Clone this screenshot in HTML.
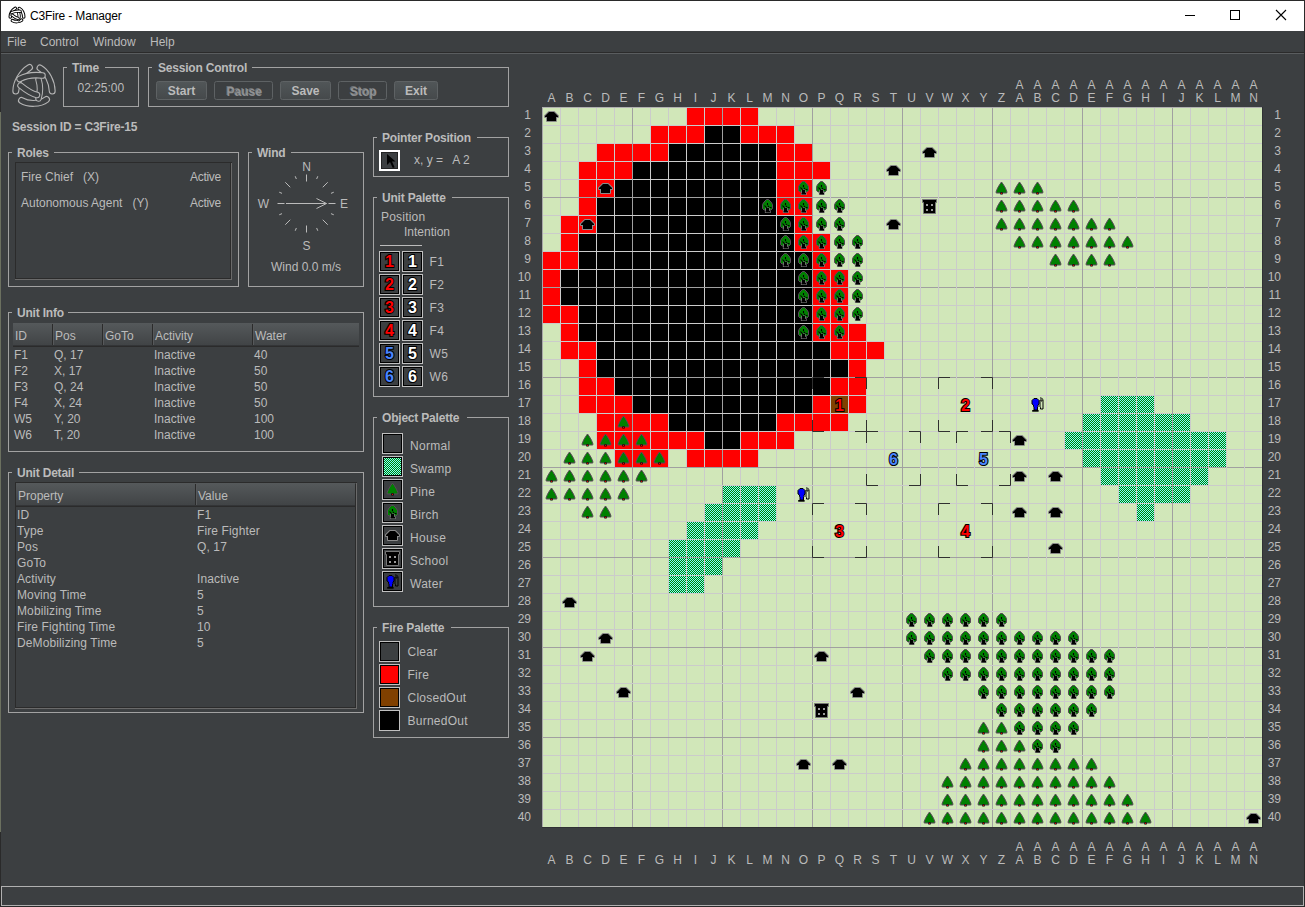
<!DOCTYPE html>
<html><head><meta charset="utf-8"><title>C3Fire - Manager</title>
<style>
html,body{margin:0;padding:0;background:#3c3f41;width:1305px;height:907px;overflow:hidden}
svg{display:block;font-family:"Liberation Sans", sans-serif}
</style></head><body>
<svg width="1305" height="907" viewBox="0 0 1305 907">
<defs>
<linearGradient id="btng" x1="0" y1="0" x2="0" y2="1"><stop offset="0" stop-color="#515658"/><stop offset="1" stop-color="#45494b"/></linearGradient>
<linearGradient id="hdrg" x1="0" y1="0" x2="0" y2="1"><stop offset="0" stop-color="#55595b"/><stop offset="1" stop-color="#3f4244"/></linearGradient>
<pattern id="swp" x="0" y="0" width="2" height="2" patternUnits="userSpaceOnUse"><rect width="2" height="2" fill="#008000"/><rect x="0" y="0" width="1" height="1" fill="#80ffff"/><rect x="1" y="1" width="1" height="1" fill="#80ffff"/></pattern>
<symbol id="house" overflow="visible"><path d="M6 4 L11 4 L15 8 L15 9 L13 9 L13 13 L4 13 L4 9 L2 9 L2 8 Z" fill="#000" stroke="#8a8a8a" stroke-width="2" paint-order="stroke" stroke-linejoin="round"/></symbol>
<symbol id="pine" overflow="visible"><path d="M8.5 2 L10.5 4.8 L12.5 8.3 L13.8 11.5 L13.8 13 L3.2 13 L3.2 11.5 L4.5 8.3 L6.5 4.8 Z" fill="#008000" stroke="#5a465a" stroke-width="1" stroke-linejoin="round"/><rect x="7.3" y="12.3" width="2.4" height="2.2" fill="#000"/><rect x="8" y="12.8" width="1" height="1.2" fill="#e00000"/></symbol>
<symbol id="birch" overflow="visible"><path d="M7.5 1.5 H9.5 L12 4 L13.5 6.5 V10.5 L12 12 H10 L9.5 11 H7.5 L7 12 H5 L3.5 10.5 V6.5 L5 4 Z" fill="#008000" stroke="#5a465a" stroke-width="1" stroke-linejoin="miter"/><path d="M7 10 H10 V12.5 L11 13 V14.5 H6.5 V13 L7 12.5 Z" fill="#000" stroke="#8a8a8a" stroke-width="1.2" paint-order="stroke"/><path d="M5.5 7.5 L8 10.3 M8.5 5 L8.5 7.2 M9 9 L10 8 M10.5 9.5 L12.5 9.5" stroke="#000" stroke-width="1.1" fill="none"/></symbol>
<symbol id="school" overflow="visible"><path d="M1.5 1.5 L15.5 1.5 L15.5 4.5 L14.5 4.5 L14.5 15.5 L2.5 15.5 L2.5 4.5 L1.5 4.5 Z" fill="#000" stroke="#777" stroke-width="1"/><rect x="5" y="6" width="2" height="2" fill="#9a9a9a"/><rect x="10" y="6" width="2" height="2" fill="#9a9a9a"/><rect x="5" y="11" width="2" height="2" fill="#9a9a9a"/><rect x="10" y="11" width="2" height="2" fill="#9a9a9a"/></symbol>
<symbol id="water" overflow="visible"><path d="M11 4 H14 V13 H11.5 V11.5 L11 11 Z" fill="none" stroke="#000" stroke-width="1"/><path d="M11 2 H12.5 L14 3.5" fill="none" stroke="#000" stroke-width="1"/><rect x="12" y="4.5" width="1" height="1" fill="#000"/><path d="M5 2.5 H8 L10 4.5 V8 L9 9 V10.5 L8.5 11 V14 H5 V11 L4.5 10.5 V9 L3 8 V4.5 Z" fill="#0000ff" stroke="#000" stroke-width="1"/><rect x="3.2" y="14" width="6.4" height="1.7" fill="#000"/></symbol>
</defs>
<rect x="0" y="0" width="1305" height="907" fill="#3c3f41"/><rect x="0" y="0" width="1305" height="1" fill="#2a2a2a"/><rect x="1" y="1" width="1303" height="30" fill="#ffffff"/><text x="30" y="20" font-size="12" font-weight="normal" fill="#000000" text-anchor="start" letter-spacing="-0.15">C3Fire - Manager</text><rect x="1185" y="15" width="10" height="1" fill="#000"/><rect x="1230.5" y="10.5" width="9" height="9" fill="none" stroke="#000" stroke-width="1"/><path d="M1276 10 L1286 20 M1286 10 L1276 20" stroke="#000" stroke-width="1.1" fill="none"/><text x="7" y="46" font-size="12" font-weight="normal" fill="#bbbbbb" text-anchor="start" >File</text><text x="40" y="46" font-size="12" font-weight="normal" fill="#bbbbbb" text-anchor="start" >Control</text><text x="93" y="46" font-size="12" font-weight="normal" fill="#bbbbbb" text-anchor="start" >Window</text><text x="150" y="46" font-size="12" font-weight="normal" fill="#bbbbbb" text-anchor="start" >Help</text><rect x="1" y="52" width="1303" height="1" fill="#2b2b2b"/><rect x="1" y="53" width="1303" height="1" fill="#5a5d5f"/><rect x="0" y="0" width="1" height="907" fill="#2a2a2a"/><rect x="0" y="112" width="1" height="720" fill="#6b705f"/><rect x="1304" y="0" width="1" height="907" fill="#2a2a2a"/><rect x="0" y="906" width="1305" height="1" fill="#2a2a2a"/><path d="M29.5 67.5 C 22 72 16 82 15.8 91" stroke="#b4b4b4" stroke-width="7" fill="none" stroke-linecap="round"/><path d="M29.5 67.5 C 22 72 16 82 15.8 91" stroke="#3c3f41" stroke-width="4.8" fill="none" stroke-linecap="round"/><path d="M40 68 C 47 72 52 82 52.2 91" stroke="#b4b4b4" stroke-width="7" fill="none" stroke-linecap="round"/><path d="M40 68 C 47 72 52 82 52.2 91" stroke="#3c3f41" stroke-width="4.8" fill="none" stroke-linecap="round"/><path d="M21.5 100.5 C 28 104.5 40 104.5 46.5 99.5" stroke="#b4b4b4" stroke-width="7" fill="none" stroke-linecap="round"/><path d="M21.5 100.5 C 28 104.5 40 104.5 46.5 99.5" stroke="#3c3f41" stroke-width="4.8" fill="none" stroke-linecap="round"/><path d="M38.5 79.5 C 40.5 86 40.5 92 38.5 98.5" stroke="#b4b4b4" stroke-width="6.510000000000001" fill="none" stroke-linecap="round"/><path d="M38.5 79.5 C 40.5 86 40.5 92 38.5 98.5" stroke="#3c3f41" stroke-width="4.464" fill="none" stroke-linecap="round"/><path d="M20.5 85.5 C 26 90 31 93.5 37 95" stroke="#b4b4b4" stroke-width="6.510000000000001" fill="none" stroke-linecap="round"/><path d="M20.5 85.5 C 26 90 31 93.5 37 95" stroke="#3c3f41" stroke-width="4.464" fill="none" stroke-linecap="round"/><path d="M19.5 79 C 26 75.5 34 74.5 42.5 75.5" stroke="#b4b4b4" stroke-width="6.510000000000001" fill="none" stroke-linecap="round"/><path d="M19.5 79 C 26 75.5 34 74.5 42.5 75.5" stroke="#3c3f41" stroke-width="4.464" fill="none" stroke-linecap="round"/><g transform="translate(17,15) scale(0.37) translate(-34,-85.5)"><path d="M29.5 67.5 C 22 72 16 82 15.8 91" stroke="#000000" stroke-width="9.5" fill="none" stroke-linecap="round"/><path d="M29.5 67.5 C 22 72 16 82 15.8 91" stroke="#ffffff" stroke-width="4.2" fill="none" stroke-linecap="round"/><path d="M40 68 C 47 72 52 82 52.2 91" stroke="#000000" stroke-width="9.5" fill="none" stroke-linecap="round"/><path d="M40 68 C 47 72 52 82 52.2 91" stroke="#ffffff" stroke-width="4.2" fill="none" stroke-linecap="round"/><path d="M21.5 100.5 C 28 104.5 40 104.5 46.5 99.5" stroke="#000000" stroke-width="9.5" fill="none" stroke-linecap="round"/><path d="M21.5 100.5 C 28 104.5 40 104.5 46.5 99.5" stroke="#ffffff" stroke-width="4.2" fill="none" stroke-linecap="round"/><path d="M38.5 79.5 C 40.5 86 40.5 92 38.5 98.5" stroke="#000000" stroke-width="8.835" fill="none" stroke-linecap="round"/><path d="M38.5 79.5 C 40.5 86 40.5 92 38.5 98.5" stroke="#ffffff" stroke-width="3.9060000000000006" fill="none" stroke-linecap="round"/><path d="M20.5 85.5 C 26 90 31 93.5 37 95" stroke="#000000" stroke-width="8.835" fill="none" stroke-linecap="round"/><path d="M20.5 85.5 C 26 90 31 93.5 37 95" stroke="#ffffff" stroke-width="3.9060000000000006" fill="none" stroke-linecap="round"/><path d="M19.5 79 C 26 75.5 34 74.5 42.5 75.5" stroke="#000000" stroke-width="8.835" fill="none" stroke-linecap="round"/><path d="M19.5 79 C 26 75.5 34 74.5 42.5 75.5" stroke="#ffffff" stroke-width="3.9060000000000006" fill="none" stroke-linecap="round"/></g><rect x="63" y="67" width="4" height="1" fill="#a2a2a2"/><rect x="105" y="67" width="34" height="1" fill="#a2a2a2"/><rect x="63" y="106" width="76" height="1" fill="#a2a2a2"/><rect x="63" y="67" width="1" height="40" fill="#a2a2a2"/><rect x="138" y="67" width="1" height="40" fill="#a2a2a2"/><text x="72" y="72" font-size="12" font-weight="bold" fill="#bbbbbb" text-anchor="start" letter-spacing="-0.2">Time</text><text x="77.5" y="92" font-size="12" font-weight="normal" fill="#bbbbbb" text-anchor="start" >02:25:00</text><rect x="148" y="67" width="4" height="1" fill="#a2a2a2"/><rect x="252" y="67" width="257" height="1" fill="#a2a2a2"/><rect x="148" y="106" width="361" height="1" fill="#a2a2a2"/><rect x="148" y="67" width="1" height="40" fill="#a2a2a2"/><rect x="508" y="67" width="1" height="40" fill="#a2a2a2"/><text x="158" y="72" font-size="12" font-weight="bold" fill="#bbbbbb" text-anchor="start" letter-spacing="-0.2">Session Control</text><rect x="156.5" y="81.5" width="50" height="18" rx="2" fill="url(#btng)" stroke="#5e6264"/><text x="181.5" y="95" font-size="12" font-weight="bold" fill="#bbbbbb" text-anchor="middle" >Start</text><rect x="214.5" y="81.5" width="58" height="18" rx="2" fill="#3c3f41" stroke="#5e6264"/><text x="244.5" y="96" font-size="12" font-weight="bold" fill="#8a8c8e" text-anchor="middle" >Pause</text><text x="243.5" y="95" font-size="12" font-weight="bold" fill="#9c9ea0" text-anchor="middle" opacity="0.55">Pause</text><rect x="280.5" y="81.5" width="50" height="18" rx="2" fill="url(#btng)" stroke="#5e6264"/><text x="305.5" y="95" font-size="12" font-weight="bold" fill="#bbbbbb" text-anchor="middle" >Save</text><rect x="338.5" y="81.5" width="48" height="18" rx="2" fill="#3c3f41" stroke="#5e6264"/><text x="363.5" y="96" font-size="12" font-weight="bold" fill="#8a8c8e" text-anchor="middle" >Stop</text><text x="362.5" y="95" font-size="12" font-weight="bold" fill="#9c9ea0" text-anchor="middle" opacity="0.55">Stop</text><rect x="394.5" y="81.5" width="43" height="18" rx="2" fill="url(#btng)" stroke="#5e6264"/><text x="416.0" y="95" font-size="12" font-weight="bold" fill="#bbbbbb" text-anchor="middle" >Exit</text><text x="12" y="131" font-size="12" font-weight="bold" fill="#bbbbbb" text-anchor="start" letter-spacing="-0.2">Session ID = C3Fire-15</text><rect x="8" y="152" width="4" height="1" fill="#a2a2a2"/><rect x="54" y="152" width="185" height="1" fill="#a2a2a2"/><rect x="8" y="286" width="231" height="1" fill="#a2a2a2"/><rect x="8" y="152" width="1" height="135" fill="#a2a2a2"/><rect x="238" y="152" width="1" height="135" fill="#a2a2a2"/><text x="17" y="157" font-size="12" font-weight="bold" fill="#bbbbbb" text-anchor="start" letter-spacing="-0.2">Roles</text><rect x="15" y="162" width="217" height="1" fill="#2b2b2b"/><rect x="15" y="162" width="1" height="118" fill="#2b2b2b"/><rect x="16" y="278" width="215" height="1" fill="#2b2b2b"/><rect x="230" y="163" width="1" height="116" fill="#2b2b2b"/><rect x="15" y="279" width="217" height="1" fill="#6a6a6a"/><rect x="231" y="163" width="1" height="117" fill="#6a6a6a"/><text x="21" y="181" font-size="12" font-weight="normal" fill="#bbbbbb" text-anchor="start" xml:space="preserve">Fire Chief   (X)</text><text x="190" y="181" font-size="12" font-weight="normal" fill="#bbbbbb" text-anchor="start" letter-spacing="-0.3">Active</text><text x="21" y="207" font-size="12" font-weight="normal" fill="#bbbbbb" text-anchor="start" xml:space="preserve">Autonomous Agent   (Y)</text><text x="190" y="207" font-size="12" font-weight="normal" fill="#bbbbbb" text-anchor="start" letter-spacing="-0.3">Active</text><rect x="248" y="152" width="4" height="1" fill="#a2a2a2"/><rect x="291" y="152" width="73" height="1" fill="#a2a2a2"/><rect x="248" y="286" width="116" height="1" fill="#a2a2a2"/><rect x="248" y="152" width="1" height="135" fill="#a2a2a2"/><rect x="363" y="152" width="1" height="135" fill="#a2a2a2"/><text x="257" y="157" font-size="12" font-weight="bold" fill="#bbbbbb" text-anchor="start" letter-spacing="-0.2">Wind</text><path d="M306.50 181.50 L306.50 174.50 M316.64 179.02 L317.79 176.25 M322.76 187.24 L327.71 182.29 M330.98 193.36 L333.75 192.21 M328.50 203.50 L335.50 203.50 M330.98 213.64 L333.75 214.79 M322.76 219.76 L327.71 224.71 M316.64 227.98 L317.79 230.75 M306.50 225.50 L306.50 232.50 M296.36 227.98 L295.21 230.75 M290.24 219.76 L285.29 224.71 M282.02 213.64 L279.25 214.79 M284.50 203.50 L277.50 203.50 M282.02 193.36 L279.25 192.21 M290.24 187.24 L285.29 182.29 M296.36 179.02 L295.21 176.25" stroke="#bbbbbb" stroke-width="1" fill="none"/><path d="M286 203.5 L326.5 203.5 M316.5 198.5 L326.5 203.5 L316.5 208.5" stroke="#bbbbbb" stroke-width="1" fill="none"/><text x="306.5" y="171" font-size="12" font-weight="normal" fill="#bbbbbb" text-anchor="middle" >N</text><text x="306.5" y="250" font-size="12" font-weight="normal" fill="#bbbbbb" text-anchor="middle" >S</text><text x="263.5" y="208" font-size="12" font-weight="normal" fill="#bbbbbb" text-anchor="middle" >W</text><text x="344" y="208" font-size="12" font-weight="normal" fill="#bbbbbb" text-anchor="middle" >E</text><text x="306" y="271" font-size="12" font-weight="normal" fill="#bbbbbb" text-anchor="middle" >Wind 0.0 m/s</text><rect x="8" y="312" width="4" height="1" fill="#a2a2a2"/><rect x="68" y="312" width="296" height="1" fill="#a2a2a2"/><rect x="8" y="451" width="356" height="1" fill="#a2a2a2"/><rect x="8" y="312" width="1" height="140" fill="#a2a2a2"/><rect x="363" y="312" width="1" height="140" fill="#a2a2a2"/><text x="17" y="317" font-size="12" font-weight="bold" fill="#bbbbbb" text-anchor="start" letter-spacing="-0.2">Unit Info</text><rect x="13" y="323" width="346" height="24" fill="url(#hdrg)"/><rect x="13" y="346" width="346" height="1" fill="#2b2b2b"/><rect x="13" y="345" width="346" height="1" fill="#333537"/><rect x="52" y="324" width="1" height="21" fill="#2b2b2b"/><rect x="53" y="324" width="1" height="21" fill="#57595b"/><rect x="102" y="324" width="1" height="21" fill="#2b2b2b"/><rect x="103" y="324" width="1" height="21" fill="#57595b"/><rect x="152" y="324" width="1" height="21" fill="#2b2b2b"/><rect x="153" y="324" width="1" height="21" fill="#57595b"/><rect x="252" y="324" width="1" height="21" fill="#2b2b2b"/><rect x="253" y="324" width="1" height="21" fill="#57595b"/><text x="15" y="340" font-size="12" font-weight="normal" fill="#bbbbbb" text-anchor="start" >ID</text><text x="55" y="340" font-size="12" font-weight="normal" fill="#bbbbbb" text-anchor="start" >Pos</text><text x="105" y="340" font-size="12" font-weight="normal" fill="#bbbbbb" text-anchor="start" >GoTo</text><text x="155" y="340" font-size="12" font-weight="normal" fill="#bbbbbb" text-anchor="start" >Activity</text><text x="255" y="340" font-size="12" font-weight="normal" fill="#bbbbbb" text-anchor="start" >Water</text><text x="14" y="359" font-size="12" font-weight="normal" fill="#bbbbbb" text-anchor="start" >F1</text><text x="54" y="359" font-size="12" font-weight="normal" fill="#bbbbbb" text-anchor="start" >Q, 17</text><text x="154" y="359" font-size="12" font-weight="normal" fill="#bbbbbb" text-anchor="start" >Inactive</text><text x="254" y="359" font-size="12" font-weight="normal" fill="#bbbbbb" text-anchor="start" >40</text><text x="14" y="375" font-size="12" font-weight="normal" fill="#bbbbbb" text-anchor="start" >F2</text><text x="54" y="375" font-size="12" font-weight="normal" fill="#bbbbbb" text-anchor="start" >X, 17</text><text x="154" y="375" font-size="12" font-weight="normal" fill="#bbbbbb" text-anchor="start" >Inactive</text><text x="254" y="375" font-size="12" font-weight="normal" fill="#bbbbbb" text-anchor="start" >50</text><text x="14" y="391" font-size="12" font-weight="normal" fill="#bbbbbb" text-anchor="start" >F3</text><text x="54" y="391" font-size="12" font-weight="normal" fill="#bbbbbb" text-anchor="start" >Q, 24</text><text x="154" y="391" font-size="12" font-weight="normal" fill="#bbbbbb" text-anchor="start" >Inactive</text><text x="254" y="391" font-size="12" font-weight="normal" fill="#bbbbbb" text-anchor="start" >50</text><text x="14" y="407" font-size="12" font-weight="normal" fill="#bbbbbb" text-anchor="start" >F4</text><text x="54" y="407" font-size="12" font-weight="normal" fill="#bbbbbb" text-anchor="start" >X, 24</text><text x="154" y="407" font-size="12" font-weight="normal" fill="#bbbbbb" text-anchor="start" >Inactive</text><text x="254" y="407" font-size="12" font-weight="normal" fill="#bbbbbb" text-anchor="start" >50</text><text x="14" y="423" font-size="12" font-weight="normal" fill="#bbbbbb" text-anchor="start" >W5</text><text x="54" y="423" font-size="12" font-weight="normal" fill="#bbbbbb" text-anchor="start" >Y, 20</text><text x="154" y="423" font-size="12" font-weight="normal" fill="#bbbbbb" text-anchor="start" >Inactive</text><text x="254" y="423" font-size="12" font-weight="normal" fill="#bbbbbb" text-anchor="start" >100</text><text x="14" y="439" font-size="12" font-weight="normal" fill="#bbbbbb" text-anchor="start" >W6</text><text x="54" y="439" font-size="12" font-weight="normal" fill="#bbbbbb" text-anchor="start" >T, 20</text><text x="154" y="439" font-size="12" font-weight="normal" fill="#bbbbbb" text-anchor="start" >Inactive</text><text x="254" y="439" font-size="12" font-weight="normal" fill="#bbbbbb" text-anchor="start" >100</text><rect x="8" y="472" width="4" height="1" fill="#a2a2a2"/><rect x="79" y="472" width="285" height="1" fill="#a2a2a2"/><rect x="8" y="712" width="356" height="1" fill="#a2a2a2"/><rect x="8" y="472" width="1" height="241" fill="#a2a2a2"/><rect x="363" y="472" width="1" height="241" fill="#a2a2a2"/><text x="17" y="477" font-size="12" font-weight="bold" fill="#bbbbbb" text-anchor="start" letter-spacing="-0.2">Unit Detail</text><rect x="15" y="482" width="342" height="1" fill="#2b2b2b"/><rect x="15" y="482" width="1" height="227" fill="#2b2b2b"/><rect x="15" y="708" width="342" height="1" fill="#6a6a6a"/><rect x="356" y="483" width="1" height="226" fill="#6a6a6a"/><rect x="16" y="707" width="340" height="1" fill="#2b2b2b"/><rect x="355" y="484" width="1" height="224" fill="#2b2b2b"/><rect x="16" y="483" width="339" height="24" fill="url(#hdrg)"/><rect x="16" y="506" width="339" height="1" fill="#2b2b2b"/><rect x="16" y="505" width="339" height="1" fill="#333537"/><rect x="195" y="484" width="1" height="21" fill="#2b2b2b"/><rect x="196" y="484" width="1" height="21" fill="#57595b"/><text x="18" y="500" font-size="12" font-weight="normal" fill="#bbbbbb" text-anchor="start" >Property</text><text x="198" y="500" font-size="12" font-weight="normal" fill="#bbbbbb" text-anchor="start" >Value</text><text x="17" y="519" font-size="12" font-weight="normal" fill="#bbbbbb" text-anchor="start" letter-spacing="0.12">ID</text><text x="197" y="519" font-size="12" font-weight="normal" fill="#bbbbbb" text-anchor="start" letter-spacing="0.12">F1</text><text x="17" y="535" font-size="12" font-weight="normal" fill="#bbbbbb" text-anchor="start" letter-spacing="0.12">Type</text><text x="197" y="535" font-size="12" font-weight="normal" fill="#bbbbbb" text-anchor="start" letter-spacing="0.12">Fire Fighter</text><text x="17" y="551" font-size="12" font-weight="normal" fill="#bbbbbb" text-anchor="start" letter-spacing="0.12">Pos</text><text x="197" y="551" font-size="12" font-weight="normal" fill="#bbbbbb" text-anchor="start" letter-spacing="0.12">Q, 17</text><text x="17" y="567" font-size="12" font-weight="normal" fill="#bbbbbb" text-anchor="start" letter-spacing="0.12">GoTo</text><text x="17" y="583" font-size="12" font-weight="normal" fill="#bbbbbb" text-anchor="start" letter-spacing="0.12">Activity</text><text x="197" y="583" font-size="12" font-weight="normal" fill="#bbbbbb" text-anchor="start" letter-spacing="0.12">Inactive</text><text x="17" y="599" font-size="12" font-weight="normal" fill="#bbbbbb" text-anchor="start" letter-spacing="0.12">Moving Time</text><text x="197" y="599" font-size="12" font-weight="normal" fill="#bbbbbb" text-anchor="start" letter-spacing="0.12">5</text><text x="17" y="615" font-size="12" font-weight="normal" fill="#bbbbbb" text-anchor="start" letter-spacing="0.12">Mobilizing Time</text><text x="197" y="615" font-size="12" font-weight="normal" fill="#bbbbbb" text-anchor="start" letter-spacing="0.12">5</text><text x="17" y="631" font-size="12" font-weight="normal" fill="#bbbbbb" text-anchor="start" letter-spacing="0.12">Fire Fighting Time</text><text x="197" y="631" font-size="12" font-weight="normal" fill="#bbbbbb" text-anchor="start" letter-spacing="0.12">10</text><text x="17" y="647" font-size="12" font-weight="normal" fill="#bbbbbb" text-anchor="start" letter-spacing="0.12">DeMobilizing Time</text><text x="197" y="647" font-size="12" font-weight="normal" fill="#bbbbbb" text-anchor="start" letter-spacing="0.12">5</text><rect x="373" y="137" width="4" height="1" fill="#a2a2a2"/><rect x="477" y="137" width="32" height="1" fill="#a2a2a2"/><rect x="373" y="176" width="136" height="1" fill="#a2a2a2"/><rect x="373" y="137" width="1" height="40" fill="#a2a2a2"/><rect x="508" y="137" width="1" height="40" fill="#a2a2a2"/><text x="382" y="142" font-size="12" font-weight="bold" fill="#bbbbbb" text-anchor="start" letter-spacing="-0.2">Pointer Position</text><rect x="380" y="151" width="19" height="19" fill="none" stroke="#ffffff" stroke-width="2"/><rect x="381.5" y="152.5" width="16" height="16" fill="#3c3f41" stroke="#232323" stroke-width="1"/><path d="M387 154 L387 165 L390 162 L392.8 168 L394.6 167.2 L392 161.6 L395.5 161.6 Z" fill="#000"/><text x="414" y="164" font-size="12" font-weight="normal" fill="#bbbbbb" text-anchor="start" xml:space="preserve">x, y =   A 2</text><rect x="373" y="197" width="4" height="1" fill="#a2a2a2"/><rect x="452" y="197" width="57" height="1" fill="#a2a2a2"/><rect x="373" y="396" width="136" height="1" fill="#a2a2a2"/><rect x="373" y="197" width="1" height="200" fill="#a2a2a2"/><rect x="508" y="197" width="1" height="200" fill="#a2a2a2"/><text x="382" y="202" font-size="12" font-weight="bold" fill="#bbbbbb" text-anchor="start" letter-spacing="-0.2">Unit Palette</text><text x="381" y="221" font-size="12" font-weight="normal" fill="#bbbbbb" text-anchor="start" letter-spacing="0.2">Position</text><text x="404" y="236" font-size="12" font-weight="normal" fill="#bbbbbb" text-anchor="start" >Intention</text><rect x="380" y="245" width="42" height="1" fill="#bbbbbb"/><rect x="379.5" y="251.5" width="20" height="20" fill="none" stroke="#c0c0c0"/><rect x="380.5" y="252.5" width="18" height="18" fill="#3c3f41" stroke="#000"/><rect x="402.5" y="251.5" width="20" height="20" fill="none" stroke="#c0c0c0"/><rect x="403.5" y="252.5" width="18" height="18" fill="#3c3f41" stroke="#000"/><text x="389.5" y="266.6" font-size="16" font-weight="bold" fill="#ff0000" stroke="#000" stroke-width="2" paint-order="stroke" text-anchor="middle" stroke-linejoin="miter">1</text><text x="412.5" y="266.6" font-size="16" font-weight="bold" fill="#ffffff" stroke="#000" stroke-width="2" paint-order="stroke" text-anchor="middle" stroke-linejoin="miter">1</text><text x="429.5" y="266" font-size="12" font-weight="normal" fill="#bbbbbb" text-anchor="start" letter-spacing="0.3">F1</text><rect x="379.5" y="274.5" width="20" height="20" fill="none" stroke="#c0c0c0"/><rect x="380.5" y="275.5" width="18" height="18" fill="#3c3f41" stroke="#000"/><rect x="402.5" y="274.5" width="20" height="20" fill="none" stroke="#c0c0c0"/><rect x="403.5" y="275.5" width="18" height="18" fill="#3c3f41" stroke="#000"/><text x="389.5" y="289.6" font-size="16" font-weight="bold" fill="#ff0000" stroke="#000" stroke-width="2" paint-order="stroke" text-anchor="middle" stroke-linejoin="miter">2</text><text x="412.5" y="289.6" font-size="16" font-weight="bold" fill="#ffffff" stroke="#000" stroke-width="2" paint-order="stroke" text-anchor="middle" stroke-linejoin="miter">2</text><text x="429.5" y="289" font-size="12" font-weight="normal" fill="#bbbbbb" text-anchor="start" letter-spacing="0.3">F2</text><rect x="379.5" y="297.5" width="20" height="20" fill="none" stroke="#c0c0c0"/><rect x="380.5" y="298.5" width="18" height="18" fill="#3c3f41" stroke="#000"/><rect x="402.5" y="297.5" width="20" height="20" fill="none" stroke="#c0c0c0"/><rect x="403.5" y="298.5" width="18" height="18" fill="#3c3f41" stroke="#000"/><text x="389.5" y="312.6" font-size="16" font-weight="bold" fill="#ff0000" stroke="#000" stroke-width="2" paint-order="stroke" text-anchor="middle" stroke-linejoin="miter">3</text><text x="412.5" y="312.6" font-size="16" font-weight="bold" fill="#ffffff" stroke="#000" stroke-width="2" paint-order="stroke" text-anchor="middle" stroke-linejoin="miter">3</text><text x="429.5" y="312" font-size="12" font-weight="normal" fill="#bbbbbb" text-anchor="start" letter-spacing="0.3">F3</text><rect x="379.5" y="320.5" width="20" height="20" fill="none" stroke="#c0c0c0"/><rect x="380.5" y="321.5" width="18" height="18" fill="#3c3f41" stroke="#000"/><rect x="402.5" y="320.5" width="20" height="20" fill="none" stroke="#c0c0c0"/><rect x="403.5" y="321.5" width="18" height="18" fill="#3c3f41" stroke="#000"/><text x="389.5" y="335.6" font-size="16" font-weight="bold" fill="#ff0000" stroke="#000" stroke-width="2" paint-order="stroke" text-anchor="middle" stroke-linejoin="miter">4</text><text x="412.5" y="335.6" font-size="16" font-weight="bold" fill="#ffffff" stroke="#000" stroke-width="2" paint-order="stroke" text-anchor="middle" stroke-linejoin="miter">4</text><text x="429.5" y="335" font-size="12" font-weight="normal" fill="#bbbbbb" text-anchor="start" letter-spacing="0.3">F4</text><rect x="379.5" y="343.5" width="20" height="20" fill="none" stroke="#c0c0c0"/><rect x="380.5" y="344.5" width="18" height="18" fill="#3c3f41" stroke="#000"/><rect x="402.5" y="343.5" width="20" height="20" fill="none" stroke="#c0c0c0"/><rect x="403.5" y="344.5" width="18" height="18" fill="#3c3f41" stroke="#000"/><text x="389.5" y="358.6" font-size="16" font-weight="bold" fill="#4a86ff" stroke="#000" stroke-width="2" paint-order="stroke" text-anchor="middle" stroke-linejoin="miter">5</text><text x="412.5" y="358.6" font-size="16" font-weight="bold" fill="#ffffff" stroke="#000" stroke-width="2" paint-order="stroke" text-anchor="middle" stroke-linejoin="miter">5</text><text x="429.5" y="358" font-size="12" font-weight="normal" fill="#bbbbbb" text-anchor="start" letter-spacing="0.3">W5</text><rect x="379.5" y="366.5" width="20" height="20" fill="none" stroke="#c0c0c0"/><rect x="380.5" y="367.5" width="18" height="18" fill="#3c3f41" stroke="#000"/><rect x="402.5" y="366.5" width="20" height="20" fill="none" stroke="#c0c0c0"/><rect x="403.5" y="367.5" width="18" height="18" fill="#3c3f41" stroke="#000"/><text x="389.5" y="381.6" font-size="16" font-weight="bold" fill="#4a86ff" stroke="#000" stroke-width="2" paint-order="stroke" text-anchor="middle" stroke-linejoin="miter">6</text><text x="412.5" y="381.6" font-size="16" font-weight="bold" fill="#ffffff" stroke="#000" stroke-width="2" paint-order="stroke" text-anchor="middle" stroke-linejoin="miter">6</text><text x="429.5" y="381" font-size="12" font-weight="normal" fill="#bbbbbb" text-anchor="start" letter-spacing="0.3">W6</text><rect x="373" y="417" width="4" height="1" fill="#a2a2a2"/><rect x="467" y="417" width="42" height="1" fill="#a2a2a2"/><rect x="373" y="606" width="136" height="1" fill="#a2a2a2"/><rect x="373" y="417" width="1" height="190" fill="#a2a2a2"/><rect x="508" y="417" width="1" height="190" fill="#a2a2a2"/><text x="382" y="422" font-size="12" font-weight="bold" fill="#bbbbbb" text-anchor="start" letter-spacing="-0.2">Object Palette</text><rect x="382.5" y="433.5" width="20" height="20" fill="none" stroke="#c0c0c0"/><rect x="383.5" y="434.5" width="18" height="18" fill="#3c3f41" stroke="#000"/><text x="410" y="450" font-size="12" font-weight="normal" fill="#bbbbbb" text-anchor="start" letter-spacing="0.28">Normal</text><rect x="382.5" y="456.5" width="20" height="20" fill="none" stroke="#c0c0c0"/><rect x="383.5" y="457.5" width="18" height="18" fill="#3c3f41" stroke="#000"/><rect x="384" y="458" width="17" height="17" fill="url(#swp)"/><text x="410" y="473" font-size="12" font-weight="normal" fill="#bbbbbb" text-anchor="start" letter-spacing="0.28">Swamp</text><rect x="382.5" y="479.5" width="20" height="20" fill="none" stroke="#c0c0c0"/><rect x="383.5" y="480.5" width="18" height="18" fill="#3c3f41" stroke="#000"/><use href="#pine" x="384" y="481"/><text x="410" y="496" font-size="12" font-weight="normal" fill="#bbbbbb" text-anchor="start" letter-spacing="0.28">Pine</text><rect x="382.5" y="502.5" width="20" height="20" fill="none" stroke="#c0c0c0"/><rect x="383.5" y="503.5" width="18" height="18" fill="#3c3f41" stroke="#000"/><use href="#birch" x="384" y="504"/><text x="410" y="519" font-size="12" font-weight="normal" fill="#bbbbbb" text-anchor="start" letter-spacing="0.28">Birch</text><rect x="382.5" y="525.5" width="20" height="20" fill="none" stroke="#c0c0c0"/><rect x="383.5" y="526.5" width="18" height="18" fill="#3c3f41" stroke="#000"/><use href="#house" x="384" y="527"/><text x="410" y="542" font-size="12" font-weight="normal" fill="#bbbbbb" text-anchor="start" letter-spacing="0.28">House</text><rect x="382.5" y="548.5" width="20" height="20" fill="none" stroke="#c0c0c0"/><rect x="383.5" y="549.5" width="18" height="18" fill="#3c3f41" stroke="#000"/><use href="#school" x="384" y="550"/><text x="410" y="565" font-size="12" font-weight="normal" fill="#bbbbbb" text-anchor="start" letter-spacing="0.28">School</text><rect x="382.5" y="571.5" width="20" height="20" fill="none" stroke="#c0c0c0"/><rect x="383.5" y="572.5" width="18" height="18" fill="#3c3f41" stroke="#000"/><use href="#water" x="384" y="573"/><text x="410" y="588" font-size="12" font-weight="normal" fill="#bbbbbb" text-anchor="start" letter-spacing="0.28">Water</text><rect x="373" y="627" width="4" height="1" fill="#a2a2a2"/><rect x="451" y="627" width="58" height="1" fill="#a2a2a2"/><rect x="373" y="737" width="136" height="1" fill="#a2a2a2"/><rect x="373" y="627" width="1" height="111" fill="#a2a2a2"/><rect x="508" y="627" width="1" height="111" fill="#a2a2a2"/><text x="382" y="632" font-size="12" font-weight="bold" fill="#bbbbbb" text-anchor="start" letter-spacing="-0.2">Fire Palette</text><rect x="379.5" y="641.5" width="20" height="20" fill="none" stroke="#c0c0c0"/><rect x="380.5" y="642.5" width="18" height="18" fill="#3c3f41" stroke="#000"/><text x="407.5" y="656" font-size="12" font-weight="normal" fill="#bbbbbb" text-anchor="start" letter-spacing="0.25">Clear</text><rect x="379.5" y="664.5" width="20" height="20" fill="none" stroke="#c0c0c0"/><rect x="380.5" y="665.5" width="18" height="18" fill="#ff0000" stroke="#000"/><text x="407.5" y="679" font-size="12" font-weight="normal" fill="#bbbbbb" text-anchor="start" letter-spacing="0.25">Fire</text><rect x="379.5" y="687.5" width="20" height="20" fill="none" stroke="#c0c0c0"/><rect x="380.5" y="688.5" width="18" height="18" fill="#804000" stroke="#000"/><text x="407.5" y="702" font-size="12" font-weight="normal" fill="#bbbbbb" text-anchor="start" letter-spacing="0.25">ClosedOut</text><rect x="379.5" y="710.5" width="20" height="20" fill="none" stroke="#c0c0c0"/><rect x="380.5" y="711.5" width="18" height="18" fill="#000000" stroke="#000"/><text x="407.5" y="725" font-size="12" font-weight="normal" fill="#bbbbbb" text-anchor="start" letter-spacing="0.25">BurnedOut</text><rect x="1.5" y="886.5" width="1302" height="19" fill="none" stroke="#b0b0b0"/><rect x="542" y="107" width="721" height="721" fill="#d1e7b9"/><rect x="687" y="108" width="17" height="17" fill="#ff0000"/><rect x="705" y="108" width="17" height="17" fill="#ff0000"/><rect x="723" y="108" width="17" height="17" fill="#ff0000"/><rect x="741" y="108" width="17" height="17" fill="#ff0000"/><rect x="651" y="126" width="17" height="17" fill="#ff0000"/><rect x="669" y="126" width="17" height="17" fill="#ff0000"/><rect x="687" y="126" width="17" height="17" fill="#ff0000"/><rect x="705" y="126" width="17" height="17" fill="#000000"/><rect x="723" y="126" width="17" height="17" fill="#000000"/><rect x="741" y="126" width="17" height="17" fill="#ff0000"/><rect x="759" y="126" width="17" height="17" fill="#ff0000"/><rect x="777" y="126" width="17" height="17" fill="#ff0000"/><rect x="597" y="144" width="17" height="17" fill="#ff0000"/><rect x="615" y="144" width="17" height="17" fill="#ff0000"/><rect x="633" y="144" width="17" height="17" fill="#ff0000"/><rect x="651" y="144" width="17" height="17" fill="#ff0000"/><rect x="669" y="144" width="17" height="17" fill="#000000"/><rect x="687" y="144" width="17" height="17" fill="#000000"/><rect x="705" y="144" width="17" height="17" fill="#000000"/><rect x="723" y="144" width="17" height="17" fill="#000000"/><rect x="741" y="144" width="17" height="17" fill="#000000"/><rect x="759" y="144" width="17" height="17" fill="#000000"/><rect x="777" y="144" width="17" height="17" fill="#ff0000"/><rect x="795" y="144" width="17" height="17" fill="#ff0000"/><rect x="579" y="162" width="17" height="17" fill="#ff0000"/><rect x="597" y="162" width="17" height="17" fill="#ff0000"/><rect x="615" y="162" width="17" height="17" fill="#ff0000"/><rect x="633" y="162" width="17" height="17" fill="#000000"/><rect x="651" y="162" width="17" height="17" fill="#000000"/><rect x="669" y="162" width="17" height="17" fill="#000000"/><rect x="687" y="162" width="17" height="17" fill="#000000"/><rect x="705" y="162" width="17" height="17" fill="#000000"/><rect x="723" y="162" width="17" height="17" fill="#000000"/><rect x="741" y="162" width="17" height="17" fill="#000000"/><rect x="759" y="162" width="17" height="17" fill="#000000"/><rect x="777" y="162" width="17" height="17" fill="#ff0000"/><rect x="795" y="162" width="17" height="17" fill="#ff0000"/><rect x="813" y="162" width="17" height="17" fill="#ff0000"/><rect x="579" y="180" width="17" height="17" fill="#ff0000"/><rect x="597" y="180" width="17" height="17" fill="#ff0000"/><rect x="615" y="180" width="17" height="17" fill="#000000"/><rect x="633" y="180" width="17" height="17" fill="#000000"/><rect x="651" y="180" width="17" height="17" fill="#000000"/><rect x="669" y="180" width="17" height="17" fill="#000000"/><rect x="687" y="180" width="17" height="17" fill="#000000"/><rect x="705" y="180" width="17" height="17" fill="#000000"/><rect x="723" y="180" width="17" height="17" fill="#000000"/><rect x="741" y="180" width="17" height="17" fill="#000000"/><rect x="759" y="180" width="17" height="17" fill="#000000"/><rect x="777" y="180" width="17" height="17" fill="#ff0000"/><rect x="795" y="180" width="17" height="17" fill="#ff0000"/><rect x="579" y="198" width="17" height="17" fill="#ff0000"/><rect x="597" y="198" width="17" height="17" fill="#000000"/><rect x="615" y="198" width="17" height="17" fill="#000000"/><rect x="633" y="198" width="17" height="17" fill="#000000"/><rect x="651" y="198" width="17" height="17" fill="#000000"/><rect x="669" y="198" width="17" height="17" fill="#000000"/><rect x="687" y="198" width="17" height="17" fill="#000000"/><rect x="705" y="198" width="17" height="17" fill="#000000"/><rect x="723" y="198" width="17" height="17" fill="#000000"/><rect x="741" y="198" width="17" height="17" fill="#000000"/><rect x="759" y="198" width="17" height="17" fill="#000000"/><rect x="777" y="198" width="17" height="17" fill="#ff0000"/><rect x="795" y="198" width="17" height="17" fill="#ff0000"/><rect x="561" y="216" width="17" height="17" fill="#ff0000"/><rect x="579" y="216" width="17" height="17" fill="#ff0000"/><rect x="597" y="216" width="17" height="17" fill="#000000"/><rect x="615" y="216" width="17" height="17" fill="#000000"/><rect x="633" y="216" width="17" height="17" fill="#000000"/><rect x="651" y="216" width="17" height="17" fill="#000000"/><rect x="669" y="216" width="17" height="17" fill="#000000"/><rect x="687" y="216" width="17" height="17" fill="#000000"/><rect x="705" y="216" width="17" height="17" fill="#000000"/><rect x="723" y="216" width="17" height="17" fill="#000000"/><rect x="741" y="216" width="17" height="17" fill="#000000"/><rect x="759" y="216" width="17" height="17" fill="#000000"/><rect x="777" y="216" width="17" height="17" fill="#000000"/><rect x="795" y="216" width="17" height="17" fill="#ff0000"/><rect x="561" y="234" width="17" height="17" fill="#ff0000"/><rect x="579" y="234" width="17" height="17" fill="#000000"/><rect x="597" y="234" width="17" height="17" fill="#000000"/><rect x="615" y="234" width="17" height="17" fill="#000000"/><rect x="633" y="234" width="17" height="17" fill="#000000"/><rect x="651" y="234" width="17" height="17" fill="#000000"/><rect x="669" y="234" width="17" height="17" fill="#000000"/><rect x="687" y="234" width="17" height="17" fill="#000000"/><rect x="705" y="234" width="17" height="17" fill="#000000"/><rect x="723" y="234" width="17" height="17" fill="#000000"/><rect x="741" y="234" width="17" height="17" fill="#000000"/><rect x="759" y="234" width="17" height="17" fill="#000000"/><rect x="777" y="234" width="17" height="17" fill="#000000"/><rect x="795" y="234" width="17" height="17" fill="#ff0000"/><rect x="813" y="234" width="17" height="17" fill="#ff0000"/><rect x="543" y="252" width="17" height="17" fill="#ff0000"/><rect x="561" y="252" width="17" height="17" fill="#ff0000"/><rect x="579" y="252" width="17" height="17" fill="#000000"/><rect x="597" y="252" width="17" height="17" fill="#000000"/><rect x="615" y="252" width="17" height="17" fill="#000000"/><rect x="633" y="252" width="17" height="17" fill="#000000"/><rect x="651" y="252" width="17" height="17" fill="#000000"/><rect x="669" y="252" width="17" height="17" fill="#000000"/><rect x="687" y="252" width="17" height="17" fill="#000000"/><rect x="705" y="252" width="17" height="17" fill="#000000"/><rect x="723" y="252" width="17" height="17" fill="#000000"/><rect x="741" y="252" width="17" height="17" fill="#000000"/><rect x="759" y="252" width="17" height="17" fill="#000000"/><rect x="777" y="252" width="17" height="17" fill="#000000"/><rect x="795" y="252" width="17" height="17" fill="#000000"/><rect x="813" y="252" width="17" height="17" fill="#ff0000"/><rect x="543" y="270" width="17" height="17" fill="#ff0000"/><rect x="561" y="270" width="17" height="17" fill="#000000"/><rect x="579" y="270" width="17" height="17" fill="#000000"/><rect x="597" y="270" width="17" height="17" fill="#000000"/><rect x="615" y="270" width="17" height="17" fill="#000000"/><rect x="633" y="270" width="17" height="17" fill="#000000"/><rect x="651" y="270" width="17" height="17" fill="#000000"/><rect x="669" y="270" width="17" height="17" fill="#000000"/><rect x="687" y="270" width="17" height="17" fill="#000000"/><rect x="705" y="270" width="17" height="17" fill="#000000"/><rect x="723" y="270" width="17" height="17" fill="#000000"/><rect x="741" y="270" width="17" height="17" fill="#000000"/><rect x="759" y="270" width="17" height="17" fill="#000000"/><rect x="777" y="270" width="17" height="17" fill="#000000"/><rect x="795" y="270" width="17" height="17" fill="#000000"/><rect x="813" y="270" width="17" height="17" fill="#ff0000"/><rect x="831" y="270" width="17" height="17" fill="#ff0000"/><rect x="543" y="288" width="17" height="17" fill="#ff0000"/><rect x="561" y="288" width="17" height="17" fill="#000000"/><rect x="579" y="288" width="17" height="17" fill="#000000"/><rect x="597" y="288" width="17" height="17" fill="#000000"/><rect x="615" y="288" width="17" height="17" fill="#000000"/><rect x="633" y="288" width="17" height="17" fill="#000000"/><rect x="651" y="288" width="17" height="17" fill="#000000"/><rect x="669" y="288" width="17" height="17" fill="#000000"/><rect x="687" y="288" width="17" height="17" fill="#000000"/><rect x="705" y="288" width="17" height="17" fill="#000000"/><rect x="723" y="288" width="17" height="17" fill="#000000"/><rect x="741" y="288" width="17" height="17" fill="#000000"/><rect x="759" y="288" width="17" height="17" fill="#000000"/><rect x="777" y="288" width="17" height="17" fill="#000000"/><rect x="795" y="288" width="17" height="17" fill="#000000"/><rect x="813" y="288" width="17" height="17" fill="#ff0000"/><rect x="831" y="288" width="17" height="17" fill="#ff0000"/><rect x="543" y="306" width="17" height="17" fill="#ff0000"/><rect x="561" y="306" width="17" height="17" fill="#ff0000"/><rect x="579" y="306" width="17" height="17" fill="#000000"/><rect x="597" y="306" width="17" height="17" fill="#000000"/><rect x="615" y="306" width="17" height="17" fill="#000000"/><rect x="633" y="306" width="17" height="17" fill="#000000"/><rect x="651" y="306" width="17" height="17" fill="#000000"/><rect x="669" y="306" width="17" height="17" fill="#000000"/><rect x="687" y="306" width="17" height="17" fill="#000000"/><rect x="705" y="306" width="17" height="17" fill="#000000"/><rect x="723" y="306" width="17" height="17" fill="#000000"/><rect x="741" y="306" width="17" height="17" fill="#000000"/><rect x="759" y="306" width="17" height="17" fill="#000000"/><rect x="777" y="306" width="17" height="17" fill="#000000"/><rect x="795" y="306" width="17" height="17" fill="#000000"/><rect x="813" y="306" width="17" height="17" fill="#ff0000"/><rect x="831" y="306" width="17" height="17" fill="#ff0000"/><rect x="561" y="324" width="17" height="17" fill="#ff0000"/><rect x="579" y="324" width="17" height="17" fill="#000000"/><rect x="597" y="324" width="17" height="17" fill="#000000"/><rect x="615" y="324" width="17" height="17" fill="#000000"/><rect x="633" y="324" width="17" height="17" fill="#000000"/><rect x="651" y="324" width="17" height="17" fill="#000000"/><rect x="669" y="324" width="17" height="17" fill="#000000"/><rect x="687" y="324" width="17" height="17" fill="#000000"/><rect x="705" y="324" width="17" height="17" fill="#000000"/><rect x="723" y="324" width="17" height="17" fill="#000000"/><rect x="741" y="324" width="17" height="17" fill="#000000"/><rect x="759" y="324" width="17" height="17" fill="#000000"/><rect x="777" y="324" width="17" height="17" fill="#000000"/><rect x="795" y="324" width="17" height="17" fill="#000000"/><rect x="813" y="324" width="17" height="17" fill="#ff0000"/><rect x="831" y="324" width="17" height="17" fill="#ff0000"/><rect x="849" y="324" width="17" height="17" fill="#ff0000"/><rect x="561" y="342" width="17" height="17" fill="#ff0000"/><rect x="579" y="342" width="17" height="17" fill="#ff0000"/><rect x="597" y="342" width="17" height="17" fill="#000000"/><rect x="615" y="342" width="17" height="17" fill="#000000"/><rect x="633" y="342" width="17" height="17" fill="#000000"/><rect x="651" y="342" width="17" height="17" fill="#000000"/><rect x="669" y="342" width="17" height="17" fill="#000000"/><rect x="687" y="342" width="17" height="17" fill="#000000"/><rect x="705" y="342" width="17" height="17" fill="#000000"/><rect x="723" y="342" width="17" height="17" fill="#000000"/><rect x="741" y="342" width="17" height="17" fill="#000000"/><rect x="759" y="342" width="17" height="17" fill="#000000"/><rect x="777" y="342" width="17" height="17" fill="#000000"/><rect x="795" y="342" width="17" height="17" fill="#000000"/><rect x="813" y="342" width="17" height="17" fill="#000000"/><rect x="831" y="342" width="17" height="17" fill="#ff0000"/><rect x="849" y="342" width="17" height="17" fill="#ff0000"/><rect x="867" y="342" width="17" height="17" fill="#ff0000"/><rect x="579" y="360" width="17" height="17" fill="#ff0000"/><rect x="597" y="360" width="17" height="17" fill="#000000"/><rect x="615" y="360" width="17" height="17" fill="#000000"/><rect x="633" y="360" width="17" height="17" fill="#000000"/><rect x="651" y="360" width="17" height="17" fill="#000000"/><rect x="669" y="360" width="17" height="17" fill="#000000"/><rect x="687" y="360" width="17" height="17" fill="#000000"/><rect x="705" y="360" width="17" height="17" fill="#000000"/><rect x="723" y="360" width="17" height="17" fill="#000000"/><rect x="741" y="360" width="17" height="17" fill="#000000"/><rect x="759" y="360" width="17" height="17" fill="#000000"/><rect x="777" y="360" width="17" height="17" fill="#000000"/><rect x="795" y="360" width="17" height="17" fill="#000000"/><rect x="813" y="360" width="17" height="17" fill="#000000"/><rect x="831" y="360" width="17" height="17" fill="#000000"/><rect x="849" y="360" width="17" height="17" fill="#ff0000"/><rect x="579" y="378" width="17" height="17" fill="#ff0000"/><rect x="597" y="378" width="17" height="17" fill="#ff0000"/><rect x="615" y="378" width="17" height="17" fill="#000000"/><rect x="633" y="378" width="17" height="17" fill="#000000"/><rect x="651" y="378" width="17" height="17" fill="#000000"/><rect x="669" y="378" width="17" height="17" fill="#000000"/><rect x="687" y="378" width="17" height="17" fill="#000000"/><rect x="705" y="378" width="17" height="17" fill="#000000"/><rect x="723" y="378" width="17" height="17" fill="#000000"/><rect x="741" y="378" width="17" height="17" fill="#000000"/><rect x="759" y="378" width="17" height="17" fill="#000000"/><rect x="777" y="378" width="17" height="17" fill="#000000"/><rect x="795" y="378" width="17" height="17" fill="#000000"/><rect x="813" y="378" width="17" height="17" fill="#000000"/><rect x="831" y="378" width="17" height="17" fill="#ff0000"/><rect x="849" y="378" width="17" height="17" fill="#ff0000"/><rect x="579" y="396" width="17" height="17" fill="#ff0000"/><rect x="597" y="396" width="17" height="17" fill="#ff0000"/><rect x="615" y="396" width="17" height="17" fill="#ff0000"/><rect x="633" y="396" width="17" height="17" fill="#000000"/><rect x="651" y="396" width="17" height="17" fill="#000000"/><rect x="669" y="396" width="17" height="17" fill="#000000"/><rect x="687" y="396" width="17" height="17" fill="#000000"/><rect x="705" y="396" width="17" height="17" fill="#000000"/><rect x="723" y="396" width="17" height="17" fill="#000000"/><rect x="741" y="396" width="17" height="17" fill="#000000"/><rect x="759" y="396" width="17" height="17" fill="#000000"/><rect x="777" y="396" width="17" height="17" fill="#000000"/><rect x="795" y="396" width="17" height="17" fill="#000000"/><rect x="813" y="396" width="17" height="17" fill="#ff0000"/><rect x="831" y="396" width="17" height="17" fill="#804000"/><rect x="849" y="396" width="17" height="17" fill="#ff0000"/><rect x="597" y="414" width="17" height="17" fill="#ff0000"/><rect x="615" y="414" width="17" height="17" fill="#ff0000"/><rect x="633" y="414" width="17" height="17" fill="#ff0000"/><rect x="651" y="414" width="17" height="17" fill="#ff0000"/><rect x="669" y="414" width="17" height="17" fill="#000000"/><rect x="687" y="414" width="17" height="17" fill="#000000"/><rect x="705" y="414" width="17" height="17" fill="#000000"/><rect x="723" y="414" width="17" height="17" fill="#000000"/><rect x="741" y="414" width="17" height="17" fill="#000000"/><rect x="759" y="414" width="17" height="17" fill="#000000"/><rect x="777" y="414" width="17" height="17" fill="#ff0000"/><rect x="795" y="414" width="17" height="17" fill="#ff0000"/><rect x="813" y="414" width="17" height="17" fill="#ff0000"/><rect x="831" y="414" width="17" height="17" fill="#ff0000"/><rect x="597" y="432" width="17" height="17" fill="#ff0000"/><rect x="615" y="432" width="17" height="17" fill="#ff0000"/><rect x="633" y="432" width="17" height="17" fill="#ff0000"/><rect x="651" y="432" width="17" height="17" fill="#ff0000"/><rect x="669" y="432" width="17" height="17" fill="#ff0000"/><rect x="687" y="432" width="17" height="17" fill="#ff0000"/><rect x="705" y="432" width="17" height="17" fill="#000000"/><rect x="723" y="432" width="17" height="17" fill="#000000"/><rect x="741" y="432" width="17" height="17" fill="#ff0000"/><rect x="759" y="432" width="17" height="17" fill="#ff0000"/><rect x="777" y="432" width="17" height="17" fill="#ff0000"/><rect x="615" y="450" width="17" height="17" fill="#ff0000"/><rect x="633" y="450" width="17" height="17" fill="#ff0000"/><rect x="651" y="450" width="17" height="17" fill="#ff0000"/><rect x="687" y="450" width="17" height="17" fill="#ff0000"/><rect x="705" y="450" width="17" height="17" fill="#ff0000"/><rect x="723" y="450" width="17" height="17" fill="#ff0000"/><rect x="741" y="450" width="17" height="17" fill="#ff0000"/><rect x="723" y="486" width="17" height="17" fill="url(#swp)"/><rect x="741" y="504" width="17" height="17" fill="url(#swp)"/><rect x="723" y="522" width="17" height="17" fill="url(#swp)"/><rect x="1119" y="396" width="17" height="17" fill="url(#swp)"/><rect x="1065" y="432" width="17" height="17" fill="url(#swp)"/><rect x="1173" y="432" width="17" height="17" fill="url(#swp)"/><rect x="1119" y="468" width="17" height="17" fill="url(#swp)"/><rect x="1119" y="432" width="17" height="17" fill="url(#swp)"/><rect x="1173" y="468" width="17" height="17" fill="url(#swp)"/><rect x="1155" y="486" width="17" height="17" fill="url(#swp)"/><rect x="669" y="558" width="17" height="17" fill="url(#swp)"/><rect x="1083" y="414" width="17" height="17" fill="url(#swp)"/><rect x="1137" y="414" width="17" height="17" fill="url(#swp)"/><rect x="1083" y="450" width="17" height="17" fill="url(#swp)"/><rect x="687" y="540" width="17" height="17" fill="url(#swp)"/><rect x="1137" y="450" width="17" height="17" fill="url(#swp)"/><rect x="687" y="576" width="17" height="17" fill="url(#swp)"/><rect x="1191" y="450" width="17" height="17" fill="url(#swp)"/><rect x="759" y="486" width="17" height="17" fill="url(#swp)"/><rect x="705" y="522" width="17" height="17" fill="url(#swp)"/><rect x="1101" y="396" width="17" height="17" fill="url(#swp)"/><rect x="723" y="504" width="17" height="17" fill="url(#swp)"/><rect x="1101" y="432" width="17" height="17" fill="url(#swp)"/><rect x="1209" y="432" width="17" height="17" fill="url(#swp)"/><rect x="1155" y="432" width="17" height="17" fill="url(#swp)"/><rect x="1137" y="486" width="17" height="17" fill="url(#swp)"/><rect x="1101" y="468" width="17" height="17" fill="url(#swp)"/><rect x="1155" y="468" width="17" height="17" fill="url(#swp)"/><rect x="705" y="558" width="17" height="17" fill="url(#swp)"/><rect x="669" y="540" width="17" height="17" fill="url(#swp)"/><rect x="1173" y="414" width="17" height="17" fill="url(#swp)"/><rect x="723" y="540" width="17" height="17" fill="url(#swp)"/><rect x="669" y="576" width="17" height="17" fill="url(#swp)"/><rect x="1119" y="414" width="17" height="17" fill="url(#swp)"/><rect x="1173" y="450" width="17" height="17" fill="url(#swp)"/><rect x="1119" y="450" width="17" height="17" fill="url(#swp)"/><rect x="741" y="522" width="17" height="17" fill="url(#swp)"/><rect x="705" y="504" width="17" height="17" fill="url(#swp)"/><rect x="741" y="486" width="17" height="17" fill="url(#swp)"/><rect x="1137" y="396" width="17" height="17" fill="url(#swp)"/><rect x="1083" y="432" width="17" height="17" fill="url(#swp)"/><rect x="759" y="504" width="17" height="17" fill="url(#swp)"/><rect x="687" y="522" width="17" height="17" fill="url(#swp)"/><rect x="1137" y="432" width="17" height="17" fill="url(#swp)"/><rect x="1191" y="432" width="17" height="17" fill="url(#swp)"/><rect x="1173" y="486" width="17" height="17" fill="url(#swp)"/><rect x="1137" y="468" width="17" height="17" fill="url(#swp)"/><rect x="1119" y="486" width="17" height="17" fill="url(#swp)"/><rect x="1191" y="468" width="17" height="17" fill="url(#swp)"/><rect x="1137" y="504" width="17" height="17" fill="url(#swp)"/><rect x="705" y="540" width="17" height="17" fill="url(#swp)"/><rect x="687" y="558" width="17" height="17" fill="url(#swp)"/><rect x="1101" y="414" width="17" height="17" fill="url(#swp)"/><rect x="1155" y="414" width="17" height="17" fill="url(#swp)"/><rect x="1101" y="450" width="17" height="17" fill="url(#swp)"/><rect x="1209" y="450" width="17" height="17" fill="url(#swp)"/><rect x="1155" y="450" width="17" height="17" fill="url(#swp)"/><rect x="560" y="107" width="1" height="720" fill="#cbcbcb"/><rect x="542" y="125" width="720" height="1" fill="#cbcbcb"/><rect x="578" y="107" width="1" height="720" fill="#cbcbcb"/><rect x="542" y="143" width="720" height="1" fill="#cbcbcb"/><rect x="596" y="107" width="1" height="720" fill="#cbcbcb"/><rect x="542" y="161" width="720" height="1" fill="#cbcbcb"/><rect x="614" y="107" width="1" height="720" fill="#cbcbcb"/><rect x="542" y="179" width="720" height="1" fill="#cbcbcb"/><rect x="632" y="107" width="1" height="720" fill="#a0a0a0"/><rect x="542" y="197" width="720" height="1" fill="#a0a0a0"/><rect x="650" y="107" width="1" height="720" fill="#cbcbcb"/><rect x="542" y="215" width="720" height="1" fill="#cbcbcb"/><rect x="668" y="107" width="1" height="720" fill="#cbcbcb"/><rect x="542" y="233" width="720" height="1" fill="#cbcbcb"/><rect x="686" y="107" width="1" height="720" fill="#cbcbcb"/><rect x="542" y="251" width="720" height="1" fill="#cbcbcb"/><rect x="704" y="107" width="1" height="720" fill="#cbcbcb"/><rect x="542" y="269" width="720" height="1" fill="#cbcbcb"/><rect x="722" y="107" width="1" height="720" fill="#a0a0a0"/><rect x="542" y="287" width="720" height="1" fill="#a0a0a0"/><rect x="740" y="107" width="1" height="720" fill="#cbcbcb"/><rect x="542" y="305" width="720" height="1" fill="#cbcbcb"/><rect x="758" y="107" width="1" height="720" fill="#cbcbcb"/><rect x="542" y="323" width="720" height="1" fill="#cbcbcb"/><rect x="776" y="107" width="1" height="720" fill="#cbcbcb"/><rect x="542" y="341" width="720" height="1" fill="#cbcbcb"/><rect x="794" y="107" width="1" height="720" fill="#cbcbcb"/><rect x="542" y="359" width="720" height="1" fill="#cbcbcb"/><rect x="812" y="107" width="1" height="720" fill="#a0a0a0"/><rect x="542" y="377" width="720" height="1" fill="#a0a0a0"/><rect x="830" y="107" width="1" height="720" fill="#cbcbcb"/><rect x="542" y="395" width="720" height="1" fill="#cbcbcb"/><rect x="848" y="107" width="1" height="720" fill="#cbcbcb"/><rect x="542" y="413" width="720" height="1" fill="#cbcbcb"/><rect x="866" y="107" width="1" height="720" fill="#cbcbcb"/><rect x="542" y="431" width="720" height="1" fill="#cbcbcb"/><rect x="884" y="107" width="1" height="720" fill="#cbcbcb"/><rect x="542" y="449" width="720" height="1" fill="#cbcbcb"/><rect x="902" y="107" width="1" height="720" fill="#a0a0a0"/><rect x="542" y="467" width="720" height="1" fill="#a0a0a0"/><rect x="920" y="107" width="1" height="720" fill="#cbcbcb"/><rect x="542" y="485" width="720" height="1" fill="#cbcbcb"/><rect x="938" y="107" width="1" height="720" fill="#cbcbcb"/><rect x="542" y="503" width="720" height="1" fill="#cbcbcb"/><rect x="956" y="107" width="1" height="720" fill="#cbcbcb"/><rect x="542" y="521" width="720" height="1" fill="#cbcbcb"/><rect x="974" y="107" width="1" height="720" fill="#cbcbcb"/><rect x="542" y="539" width="720" height="1" fill="#cbcbcb"/><rect x="992" y="107" width="1" height="720" fill="#a0a0a0"/><rect x="542" y="557" width="720" height="1" fill="#a0a0a0"/><rect x="1010" y="107" width="1" height="720" fill="#cbcbcb"/><rect x="542" y="575" width="720" height="1" fill="#cbcbcb"/><rect x="1028" y="107" width="1" height="720" fill="#cbcbcb"/><rect x="542" y="593" width="720" height="1" fill="#cbcbcb"/><rect x="1046" y="107" width="1" height="720" fill="#cbcbcb"/><rect x="542" y="611" width="720" height="1" fill="#cbcbcb"/><rect x="1064" y="107" width="1" height="720" fill="#cbcbcb"/><rect x="542" y="629" width="720" height="1" fill="#cbcbcb"/><rect x="1082" y="107" width="1" height="720" fill="#a0a0a0"/><rect x="542" y="647" width="720" height="1" fill="#a0a0a0"/><rect x="1100" y="107" width="1" height="720" fill="#cbcbcb"/><rect x="542" y="665" width="720" height="1" fill="#cbcbcb"/><rect x="1118" y="107" width="1" height="720" fill="#cbcbcb"/><rect x="542" y="683" width="720" height="1" fill="#cbcbcb"/><rect x="1136" y="107" width="1" height="720" fill="#cbcbcb"/><rect x="542" y="701" width="720" height="1" fill="#cbcbcb"/><rect x="1154" y="107" width="1" height="720" fill="#cbcbcb"/><rect x="542" y="719" width="720" height="1" fill="#cbcbcb"/><rect x="1172" y="107" width="1" height="720" fill="#a0a0a0"/><rect x="542" y="737" width="720" height="1" fill="#a0a0a0"/><rect x="1190" y="107" width="1" height="720" fill="#cbcbcb"/><rect x="542" y="755" width="720" height="1" fill="#cbcbcb"/><rect x="1208" y="107" width="1" height="720" fill="#cbcbcb"/><rect x="542" y="773" width="720" height="1" fill="#cbcbcb"/><rect x="1226" y="107" width="1" height="720" fill="#cbcbcb"/><rect x="542" y="791" width="720" height="1" fill="#cbcbcb"/><rect x="1244" y="107" width="1" height="720" fill="#cbcbcb"/><rect x="542" y="809" width="720" height="1" fill="#cbcbcb"/><rect x="542" y="107" width="1" height="720" fill="#a8a8a8"/><rect x="542" y="107" width="720" height="1" fill="#b0b0b0"/><rect x="1262" y="107" width="1" height="721" fill="#2f3133"/><rect x="542" y="827" width="721" height="1" fill="#2f3133"/><use href="#house" x="543" y="108"/><use href="#house" x="597" y="180"/><use href="#house" x="579" y="216"/><use href="#house" x="885" y="162"/><use href="#house" x="885" y="216"/><use href="#house" x="921" y="144"/><use href="#house" x="1011" y="432"/><use href="#house" x="1011" y="468"/><use href="#house" x="1047" y="468"/><use href="#house" x="1011" y="504"/><use href="#house" x="1047" y="504"/><use href="#house" x="1047" y="540"/><use href="#house" x="561" y="594"/><use href="#house" x="597" y="630"/><use href="#house" x="579" y="648"/><use href="#house" x="615" y="684"/><use href="#house" x="813" y="648"/><use href="#house" x="849" y="684"/><use href="#house" x="795" y="756"/><use href="#house" x="831" y="756"/><use href="#house" x="1245" y="810"/><use href="#school" x="921" y="198"/><use href="#school" x="813" y="702"/><use href="#water" x="1029" y="396"/><use href="#water" x="795" y="486"/><use href="#pine" x="615" y="414"/><use href="#pine" x="579" y="432"/><use href="#pine" x="597" y="432"/><use href="#pine" x="615" y="432"/><use href="#pine" x="633" y="432"/><use href="#pine" x="561" y="450"/><use href="#pine" x="579" y="450"/><use href="#pine" x="597" y="450"/><use href="#pine" x="615" y="450"/><use href="#pine" x="633" y="450"/><use href="#pine" x="651" y="450"/><use href="#pine" x="543" y="468"/><use href="#pine" x="561" y="468"/><use href="#pine" x="579" y="468"/><use href="#pine" x="597" y="468"/><use href="#pine" x="615" y="468"/><use href="#pine" x="633" y="468"/><use href="#pine" x="543" y="486"/><use href="#pine" x="561" y="486"/><use href="#pine" x="579" y="486"/><use href="#pine" x="597" y="486"/><use href="#pine" x="615" y="486"/><use href="#pine" x="579" y="504"/><use href="#pine" x="597" y="504"/><use href="#pine" x="993" y="180"/><use href="#pine" x="1011" y="180"/><use href="#pine" x="1029" y="180"/><use href="#pine" x="993" y="198"/><use href="#pine" x="1011" y="198"/><use href="#pine" x="1029" y="198"/><use href="#pine" x="1047" y="198"/><use href="#pine" x="1065" y="198"/><use href="#pine" x="993" y="216"/><use href="#pine" x="1011" y="216"/><use href="#pine" x="1029" y="216"/><use href="#pine" x="1047" y="216"/><use href="#pine" x="1065" y="216"/><use href="#pine" x="1083" y="216"/><use href="#pine" x="1101" y="216"/><use href="#pine" x="1011" y="234"/><use href="#pine" x="1029" y="234"/><use href="#pine" x="1047" y="234"/><use href="#pine" x="1065" y="234"/><use href="#pine" x="1083" y="234"/><use href="#pine" x="1101" y="234"/><use href="#pine" x="1119" y="234"/><use href="#pine" x="1047" y="252"/><use href="#pine" x="1065" y="252"/><use href="#pine" x="1083" y="252"/><use href="#pine" x="1101" y="252"/><use href="#pine" x="975" y="720"/><use href="#pine" x="993" y="720"/><use href="#pine" x="975" y="738"/><use href="#pine" x="993" y="738"/><use href="#pine" x="1011" y="738"/><use href="#pine" x="957" y="756"/><use href="#pine" x="975" y="756"/><use href="#pine" x="993" y="756"/><use href="#pine" x="1011" y="756"/><use href="#pine" x="1029" y="756"/><use href="#pine" x="1047" y="756"/><use href="#pine" x="1065" y="756"/><use href="#pine" x="1083" y="756"/><use href="#pine" x="939" y="774"/><use href="#pine" x="957" y="774"/><use href="#pine" x="975" y="774"/><use href="#pine" x="993" y="774"/><use href="#pine" x="1011" y="774"/><use href="#pine" x="1029" y="774"/><use href="#pine" x="1047" y="774"/><use href="#pine" x="1065" y="774"/><use href="#pine" x="1083" y="774"/><use href="#pine" x="1101" y="774"/><use href="#pine" x="939" y="792"/><use href="#pine" x="957" y="792"/><use href="#pine" x="975" y="792"/><use href="#pine" x="993" y="792"/><use href="#pine" x="1011" y="792"/><use href="#pine" x="1029" y="792"/><use href="#pine" x="1047" y="792"/><use href="#pine" x="1065" y="792"/><use href="#pine" x="1083" y="792"/><use href="#pine" x="1101" y="792"/><use href="#pine" x="1119" y="792"/><use href="#pine" x="921" y="810"/><use href="#pine" x="939" y="810"/><use href="#pine" x="957" y="810"/><use href="#pine" x="975" y="810"/><use href="#pine" x="993" y="810"/><use href="#pine" x="1011" y="810"/><use href="#pine" x="1029" y="810"/><use href="#pine" x="1047" y="810"/><use href="#pine" x="1065" y="810"/><use href="#pine" x="1083" y="810"/><use href="#pine" x="1101" y="810"/><use href="#pine" x="1119" y="810"/><use href="#pine" x="1137" y="810"/><use href="#birch" x="795" y="180"/><use href="#birch" x="813" y="180"/><use href="#birch" x="759" y="198"/><use href="#birch" x="777" y="198"/><use href="#birch" x="795" y="198"/><use href="#birch" x="813" y="198"/><use href="#birch" x="831" y="198"/><use href="#birch" x="777" y="216"/><use href="#birch" x="795" y="216"/><use href="#birch" x="813" y="216"/><use href="#birch" x="831" y="216"/><use href="#birch" x="777" y="234"/><use href="#birch" x="795" y="234"/><use href="#birch" x="813" y="234"/><use href="#birch" x="831" y="234"/><use href="#birch" x="849" y="234"/><use href="#birch" x="777" y="252"/><use href="#birch" x="795" y="252"/><use href="#birch" x="813" y="252"/><use href="#birch" x="831" y="252"/><use href="#birch" x="849" y="252"/><use href="#birch" x="795" y="270"/><use href="#birch" x="813" y="270"/><use href="#birch" x="831" y="270"/><use href="#birch" x="849" y="270"/><use href="#birch" x="795" y="288"/><use href="#birch" x="813" y="288"/><use href="#birch" x="831" y="288"/><use href="#birch" x="849" y="288"/><use href="#birch" x="795" y="306"/><use href="#birch" x="813" y="306"/><use href="#birch" x="831" y="306"/><use href="#birch" x="849" y="306"/><use href="#birch" x="795" y="324"/><use href="#birch" x="813" y="324"/><use href="#birch" x="831" y="324"/><use href="#birch" x="903" y="612"/><use href="#birch" x="921" y="612"/><use href="#birch" x="939" y="612"/><use href="#birch" x="957" y="612"/><use href="#birch" x="975" y="612"/><use href="#birch" x="993" y="612"/><use href="#birch" x="903" y="630"/><use href="#birch" x="921" y="630"/><use href="#birch" x="939" y="630"/><use href="#birch" x="957" y="630"/><use href="#birch" x="975" y="630"/><use href="#birch" x="993" y="630"/><use href="#birch" x="1011" y="630"/><use href="#birch" x="1029" y="630"/><use href="#birch" x="1047" y="630"/><use href="#birch" x="1065" y="630"/><use href="#birch" x="921" y="648"/><use href="#birch" x="939" y="648"/><use href="#birch" x="957" y="648"/><use href="#birch" x="975" y="648"/><use href="#birch" x="993" y="648"/><use href="#birch" x="1011" y="648"/><use href="#birch" x="1029" y="648"/><use href="#birch" x="1047" y="648"/><use href="#birch" x="1065" y="648"/><use href="#birch" x="1083" y="648"/><use href="#birch" x="1101" y="648"/><use href="#birch" x="939" y="666"/><use href="#birch" x="957" y="666"/><use href="#birch" x="975" y="666"/><use href="#birch" x="993" y="666"/><use href="#birch" x="1011" y="666"/><use href="#birch" x="1029" y="666"/><use href="#birch" x="1047" y="666"/><use href="#birch" x="1065" y="666"/><use href="#birch" x="1083" y="666"/><use href="#birch" x="1101" y="666"/><use href="#birch" x="975" y="684"/><use href="#birch" x="993" y="684"/><use href="#birch" x="1011" y="684"/><use href="#birch" x="1029" y="684"/><use href="#birch" x="1047" y="684"/><use href="#birch" x="1065" y="684"/><use href="#birch" x="1083" y="684"/><use href="#birch" x="1101" y="684"/><use href="#birch" x="993" y="702"/><use href="#birch" x="1011" y="702"/><use href="#birch" x="1029" y="702"/><use href="#birch" x="1047" y="702"/><use href="#birch" x="1065" y="702"/><use href="#birch" x="1083" y="702"/><use href="#birch" x="1011" y="720"/><use href="#birch" x="1029" y="720"/><use href="#birch" x="1047" y="720"/><use href="#birch" x="1065" y="720"/><use href="#birch" x="1029" y="738"/><use href="#birch" x="1047" y="738"/><text x="839.5" y="410.7" font-size="16" font-weight="bold" fill="#ff0000" stroke="#000" stroke-width="2" paint-order="stroke" text-anchor="middle" stroke-linejoin="miter">1</text><text x="965.5" y="410.7" font-size="16" font-weight="bold" fill="#ff0000" stroke="#000" stroke-width="2" paint-order="stroke" text-anchor="middle" stroke-linejoin="miter">2</text><text x="839.5" y="536.7" font-size="16" font-weight="bold" fill="#ff0000" stroke="#000" stroke-width="2" paint-order="stroke" text-anchor="middle" stroke-linejoin="miter">3</text><text x="965.5" y="536.7" font-size="16" font-weight="bold" fill="#ff0000" stroke="#000" stroke-width="2" paint-order="stroke" text-anchor="middle" stroke-linejoin="miter">4</text><text x="983.5" y="464.7" font-size="16" font-weight="bold" fill="#4a86ff" stroke="#000" stroke-width="2" paint-order="stroke" text-anchor="middle" stroke-linejoin="miter">5</text><text x="893.5" y="464.7" font-size="16" font-weight="bold" fill="#4a86ff" stroke="#000" stroke-width="2" paint-order="stroke" text-anchor="middle" stroke-linejoin="miter">6</text><path d="M823.5 377.5 L812.5 377.5 L812.5 388.5 M855.5 377.5 L866.5 377.5 L866.5 388.5 M823.5 431.5 L812.5 431.5 L812.5 420.5 M855.5 431.5 L866.5 431.5 L866.5 420.5 M949.5 377.5 L938.5 377.5 L938.5 388.5 M981.5 377.5 L992.5 377.5 L992.5 388.5 M949.5 431.5 L938.5 431.5 L938.5 420.5 M981.5 431.5 L992.5 431.5 L992.5 420.5 M823.5 503.5 L812.5 503.5 L812.5 514.5 M855.5 503.5 L866.5 503.5 L866.5 514.5 M823.5 557.5 L812.5 557.5 L812.5 546.5 M855.5 557.5 L866.5 557.5 L866.5 546.5 M949.5 503.5 L938.5 503.5 L938.5 514.5 M981.5 503.5 L992.5 503.5 L992.5 514.5 M949.5 557.5 L938.5 557.5 L938.5 546.5 M981.5 557.5 L992.5 557.5 L992.5 546.5 M967.5 431.5 L956.5 431.5 L956.5 442.5 M999.5 431.5 L1010.5 431.5 L1010.5 442.5 M967.5 485.5 L956.5 485.5 L956.5 474.5 M999.5 485.5 L1010.5 485.5 L1010.5 474.5 M877.5 431.5 L866.5 431.5 L866.5 442.5 M909.5 431.5 L920.5 431.5 L920.5 442.5 M877.5 485.5 L866.5 485.5 L866.5 474.5 M909.5 485.5 L920.5 485.5 L920.5 474.5" stroke="#303030" stroke-width="1" fill="none" stroke-linecap="square"/><text x="551.5" y="102" font-size="12" font-weight="normal" fill="#bbbbbb" text-anchor="middle" >A</text><text x="551.5" y="864" font-size="12" font-weight="normal" fill="#bbbbbb" text-anchor="middle" >A</text><text x="569.5" y="102" font-size="12" font-weight="normal" fill="#bbbbbb" text-anchor="middle" >B</text><text x="569.5" y="864" font-size="12" font-weight="normal" fill="#bbbbbb" text-anchor="middle" >B</text><text x="587.5" y="102" font-size="12" font-weight="normal" fill="#bbbbbb" text-anchor="middle" >C</text><text x="587.5" y="864" font-size="12" font-weight="normal" fill="#bbbbbb" text-anchor="middle" >C</text><text x="605.5" y="102" font-size="12" font-weight="normal" fill="#bbbbbb" text-anchor="middle" >D</text><text x="605.5" y="864" font-size="12" font-weight="normal" fill="#bbbbbb" text-anchor="middle" >D</text><text x="623.5" y="102" font-size="12" font-weight="normal" fill="#bbbbbb" text-anchor="middle" >E</text><text x="623.5" y="864" font-size="12" font-weight="normal" fill="#bbbbbb" text-anchor="middle" >E</text><text x="641.5" y="102" font-size="12" font-weight="normal" fill="#bbbbbb" text-anchor="middle" >F</text><text x="641.5" y="864" font-size="12" font-weight="normal" fill="#bbbbbb" text-anchor="middle" >F</text><text x="659.5" y="102" font-size="12" font-weight="normal" fill="#bbbbbb" text-anchor="middle" >G</text><text x="659.5" y="864" font-size="12" font-weight="normal" fill="#bbbbbb" text-anchor="middle" >G</text><text x="677.5" y="102" font-size="12" font-weight="normal" fill="#bbbbbb" text-anchor="middle" >H</text><text x="677.5" y="864" font-size="12" font-weight="normal" fill="#bbbbbb" text-anchor="middle" >H</text><text x="695.5" y="102" font-size="12" font-weight="normal" fill="#bbbbbb" text-anchor="middle" >I</text><text x="695.5" y="864" font-size="12" font-weight="normal" fill="#bbbbbb" text-anchor="middle" >I</text><text x="713.5" y="102" font-size="12" font-weight="normal" fill="#bbbbbb" text-anchor="middle" >J</text><text x="713.5" y="864" font-size="12" font-weight="normal" fill="#bbbbbb" text-anchor="middle" >J</text><text x="731.5" y="102" font-size="12" font-weight="normal" fill="#bbbbbb" text-anchor="middle" >K</text><text x="731.5" y="864" font-size="12" font-weight="normal" fill="#bbbbbb" text-anchor="middle" >K</text><text x="749.5" y="102" font-size="12" font-weight="normal" fill="#bbbbbb" text-anchor="middle" >L</text><text x="749.5" y="864" font-size="12" font-weight="normal" fill="#bbbbbb" text-anchor="middle" >L</text><text x="767.5" y="102" font-size="12" font-weight="normal" fill="#bbbbbb" text-anchor="middle" >M</text><text x="767.5" y="864" font-size="12" font-weight="normal" fill="#bbbbbb" text-anchor="middle" >M</text><text x="785.5" y="102" font-size="12" font-weight="normal" fill="#bbbbbb" text-anchor="middle" >N</text><text x="785.5" y="864" font-size="12" font-weight="normal" fill="#bbbbbb" text-anchor="middle" >N</text><text x="803.5" y="102" font-size="12" font-weight="normal" fill="#bbbbbb" text-anchor="middle" >O</text><text x="803.5" y="864" font-size="12" font-weight="normal" fill="#bbbbbb" text-anchor="middle" >O</text><text x="821.5" y="102" font-size="12" font-weight="normal" fill="#bbbbbb" text-anchor="middle" >P</text><text x="821.5" y="864" font-size="12" font-weight="normal" fill="#bbbbbb" text-anchor="middle" >P</text><text x="839.5" y="102" font-size="12" font-weight="normal" fill="#bbbbbb" text-anchor="middle" >Q</text><text x="839.5" y="864" font-size="12" font-weight="normal" fill="#bbbbbb" text-anchor="middle" >Q</text><text x="857.5" y="102" font-size="12" font-weight="normal" fill="#bbbbbb" text-anchor="middle" >R</text><text x="857.5" y="864" font-size="12" font-weight="normal" fill="#bbbbbb" text-anchor="middle" >R</text><text x="875.5" y="102" font-size="12" font-weight="normal" fill="#bbbbbb" text-anchor="middle" >S</text><text x="875.5" y="864" font-size="12" font-weight="normal" fill="#bbbbbb" text-anchor="middle" >S</text><text x="893.5" y="102" font-size="12" font-weight="normal" fill="#bbbbbb" text-anchor="middle" >T</text><text x="893.5" y="864" font-size="12" font-weight="normal" fill="#bbbbbb" text-anchor="middle" >T</text><text x="911.5" y="102" font-size="12" font-weight="normal" fill="#bbbbbb" text-anchor="middle" >U</text><text x="911.5" y="864" font-size="12" font-weight="normal" fill="#bbbbbb" text-anchor="middle" >U</text><text x="929.5" y="102" font-size="12" font-weight="normal" fill="#bbbbbb" text-anchor="middle" >V</text><text x="929.5" y="864" font-size="12" font-weight="normal" fill="#bbbbbb" text-anchor="middle" >V</text><text x="947.5" y="102" font-size="12" font-weight="normal" fill="#bbbbbb" text-anchor="middle" >W</text><text x="947.5" y="864" font-size="12" font-weight="normal" fill="#bbbbbb" text-anchor="middle" >W</text><text x="965.5" y="102" font-size="12" font-weight="normal" fill="#bbbbbb" text-anchor="middle" >X</text><text x="965.5" y="864" font-size="12" font-weight="normal" fill="#bbbbbb" text-anchor="middle" >X</text><text x="983.5" y="102" font-size="12" font-weight="normal" fill="#bbbbbb" text-anchor="middle" >Y</text><text x="983.5" y="864" font-size="12" font-weight="normal" fill="#bbbbbb" text-anchor="middle" >Y</text><text x="1001.5" y="102" font-size="12" font-weight="normal" fill="#bbbbbb" text-anchor="middle" >Z</text><text x="1001.5" y="864" font-size="12" font-weight="normal" fill="#bbbbbb" text-anchor="middle" >Z</text><text x="1019.5" y="89" font-size="12" font-weight="normal" fill="#bbbbbb" text-anchor="middle" >A</text><text x="1019.5" y="102" font-size="12" font-weight="normal" fill="#bbbbbb" text-anchor="middle" >A</text><text x="1019.5" y="851" font-size="12" font-weight="normal" fill="#bbbbbb" text-anchor="middle" >A</text><text x="1019.5" y="864" font-size="12" font-weight="normal" fill="#bbbbbb" text-anchor="middle" >A</text><text x="1037.5" y="89" font-size="12" font-weight="normal" fill="#bbbbbb" text-anchor="middle" >A</text><text x="1037.5" y="102" font-size="12" font-weight="normal" fill="#bbbbbb" text-anchor="middle" >B</text><text x="1037.5" y="851" font-size="12" font-weight="normal" fill="#bbbbbb" text-anchor="middle" >A</text><text x="1037.5" y="864" font-size="12" font-weight="normal" fill="#bbbbbb" text-anchor="middle" >B</text><text x="1055.5" y="89" font-size="12" font-weight="normal" fill="#bbbbbb" text-anchor="middle" >A</text><text x="1055.5" y="102" font-size="12" font-weight="normal" fill="#bbbbbb" text-anchor="middle" >C</text><text x="1055.5" y="851" font-size="12" font-weight="normal" fill="#bbbbbb" text-anchor="middle" >A</text><text x="1055.5" y="864" font-size="12" font-weight="normal" fill="#bbbbbb" text-anchor="middle" >C</text><text x="1073.5" y="89" font-size="12" font-weight="normal" fill="#bbbbbb" text-anchor="middle" >A</text><text x="1073.5" y="102" font-size="12" font-weight="normal" fill="#bbbbbb" text-anchor="middle" >D</text><text x="1073.5" y="851" font-size="12" font-weight="normal" fill="#bbbbbb" text-anchor="middle" >A</text><text x="1073.5" y="864" font-size="12" font-weight="normal" fill="#bbbbbb" text-anchor="middle" >D</text><text x="1091.5" y="89" font-size="12" font-weight="normal" fill="#bbbbbb" text-anchor="middle" >A</text><text x="1091.5" y="102" font-size="12" font-weight="normal" fill="#bbbbbb" text-anchor="middle" >E</text><text x="1091.5" y="851" font-size="12" font-weight="normal" fill="#bbbbbb" text-anchor="middle" >A</text><text x="1091.5" y="864" font-size="12" font-weight="normal" fill="#bbbbbb" text-anchor="middle" >E</text><text x="1109.5" y="89" font-size="12" font-weight="normal" fill="#bbbbbb" text-anchor="middle" >A</text><text x="1109.5" y="102" font-size="12" font-weight="normal" fill="#bbbbbb" text-anchor="middle" >F</text><text x="1109.5" y="851" font-size="12" font-weight="normal" fill="#bbbbbb" text-anchor="middle" >A</text><text x="1109.5" y="864" font-size="12" font-weight="normal" fill="#bbbbbb" text-anchor="middle" >F</text><text x="1127.5" y="89" font-size="12" font-weight="normal" fill="#bbbbbb" text-anchor="middle" >A</text><text x="1127.5" y="102" font-size="12" font-weight="normal" fill="#bbbbbb" text-anchor="middle" >G</text><text x="1127.5" y="851" font-size="12" font-weight="normal" fill="#bbbbbb" text-anchor="middle" >A</text><text x="1127.5" y="864" font-size="12" font-weight="normal" fill="#bbbbbb" text-anchor="middle" >G</text><text x="1145.5" y="89" font-size="12" font-weight="normal" fill="#bbbbbb" text-anchor="middle" >A</text><text x="1145.5" y="102" font-size="12" font-weight="normal" fill="#bbbbbb" text-anchor="middle" >H</text><text x="1145.5" y="851" font-size="12" font-weight="normal" fill="#bbbbbb" text-anchor="middle" >A</text><text x="1145.5" y="864" font-size="12" font-weight="normal" fill="#bbbbbb" text-anchor="middle" >H</text><text x="1163.5" y="89" font-size="12" font-weight="normal" fill="#bbbbbb" text-anchor="middle" >A</text><text x="1163.5" y="102" font-size="12" font-weight="normal" fill="#bbbbbb" text-anchor="middle" >I</text><text x="1163.5" y="851" font-size="12" font-weight="normal" fill="#bbbbbb" text-anchor="middle" >A</text><text x="1163.5" y="864" font-size="12" font-weight="normal" fill="#bbbbbb" text-anchor="middle" >I</text><text x="1181.5" y="89" font-size="12" font-weight="normal" fill="#bbbbbb" text-anchor="middle" >A</text><text x="1181.5" y="102" font-size="12" font-weight="normal" fill="#bbbbbb" text-anchor="middle" >J</text><text x="1181.5" y="851" font-size="12" font-weight="normal" fill="#bbbbbb" text-anchor="middle" >A</text><text x="1181.5" y="864" font-size="12" font-weight="normal" fill="#bbbbbb" text-anchor="middle" >J</text><text x="1199.5" y="89" font-size="12" font-weight="normal" fill="#bbbbbb" text-anchor="middle" >A</text><text x="1199.5" y="102" font-size="12" font-weight="normal" fill="#bbbbbb" text-anchor="middle" >K</text><text x="1199.5" y="851" font-size="12" font-weight="normal" fill="#bbbbbb" text-anchor="middle" >A</text><text x="1199.5" y="864" font-size="12" font-weight="normal" fill="#bbbbbb" text-anchor="middle" >K</text><text x="1217.5" y="89" font-size="12" font-weight="normal" fill="#bbbbbb" text-anchor="middle" >A</text><text x="1217.5" y="102" font-size="12" font-weight="normal" fill="#bbbbbb" text-anchor="middle" >L</text><text x="1217.5" y="851" font-size="12" font-weight="normal" fill="#bbbbbb" text-anchor="middle" >A</text><text x="1217.5" y="864" font-size="12" font-weight="normal" fill="#bbbbbb" text-anchor="middle" >L</text><text x="1235.5" y="89" font-size="12" font-weight="normal" fill="#bbbbbb" text-anchor="middle" >A</text><text x="1235.5" y="102" font-size="12" font-weight="normal" fill="#bbbbbb" text-anchor="middle" >M</text><text x="1235.5" y="851" font-size="12" font-weight="normal" fill="#bbbbbb" text-anchor="middle" >A</text><text x="1235.5" y="864" font-size="12" font-weight="normal" fill="#bbbbbb" text-anchor="middle" >M</text><text x="1253.5" y="89" font-size="12" font-weight="normal" fill="#bbbbbb" text-anchor="middle" >A</text><text x="1253.5" y="102" font-size="12" font-weight="normal" fill="#bbbbbb" text-anchor="middle" >N</text><text x="1253.5" y="851" font-size="12" font-weight="normal" fill="#bbbbbb" text-anchor="middle" >A</text><text x="1253.5" y="864" font-size="12" font-weight="normal" fill="#bbbbbb" text-anchor="middle" >N</text><text x="531" y="119" font-size="12" font-weight="normal" fill="#bbbbbb" text-anchor="end" >1</text><text x="1281" y="119" font-size="12" font-weight="normal" fill="#bbbbbb" text-anchor="end" >1</text><text x="531" y="137" font-size="12" font-weight="normal" fill="#bbbbbb" text-anchor="end" >2</text><text x="1281" y="137" font-size="12" font-weight="normal" fill="#bbbbbb" text-anchor="end" >2</text><text x="531" y="155" font-size="12" font-weight="normal" fill="#bbbbbb" text-anchor="end" >3</text><text x="1281" y="155" font-size="12" font-weight="normal" fill="#bbbbbb" text-anchor="end" >3</text><text x="531" y="173" font-size="12" font-weight="normal" fill="#bbbbbb" text-anchor="end" >4</text><text x="1281" y="173" font-size="12" font-weight="normal" fill="#bbbbbb" text-anchor="end" >4</text><text x="531" y="191" font-size="12" font-weight="normal" fill="#bbbbbb" text-anchor="end" >5</text><text x="1281" y="191" font-size="12" font-weight="normal" fill="#bbbbbb" text-anchor="end" >5</text><text x="531" y="209" font-size="12" font-weight="normal" fill="#bbbbbb" text-anchor="end" >6</text><text x="1281" y="209" font-size="12" font-weight="normal" fill="#bbbbbb" text-anchor="end" >6</text><text x="531" y="227" font-size="12" font-weight="normal" fill="#bbbbbb" text-anchor="end" >7</text><text x="1281" y="227" font-size="12" font-weight="normal" fill="#bbbbbb" text-anchor="end" >7</text><text x="531" y="245" font-size="12" font-weight="normal" fill="#bbbbbb" text-anchor="end" >8</text><text x="1281" y="245" font-size="12" font-weight="normal" fill="#bbbbbb" text-anchor="end" >8</text><text x="531" y="263" font-size="12" font-weight="normal" fill="#bbbbbb" text-anchor="end" >9</text><text x="1281" y="263" font-size="12" font-weight="normal" fill="#bbbbbb" text-anchor="end" >9</text><text x="531" y="281" font-size="12" font-weight="normal" fill="#bbbbbb" text-anchor="end" >10</text><text x="1281" y="281" font-size="12" font-weight="normal" fill="#bbbbbb" text-anchor="end" >10</text><text x="531" y="299" font-size="12" font-weight="normal" fill="#bbbbbb" text-anchor="end" >11</text><text x="1281" y="299" font-size="12" font-weight="normal" fill="#bbbbbb" text-anchor="end" >11</text><text x="531" y="317" font-size="12" font-weight="normal" fill="#bbbbbb" text-anchor="end" >12</text><text x="1281" y="317" font-size="12" font-weight="normal" fill="#bbbbbb" text-anchor="end" >12</text><text x="531" y="335" font-size="12" font-weight="normal" fill="#bbbbbb" text-anchor="end" >13</text><text x="1281" y="335" font-size="12" font-weight="normal" fill="#bbbbbb" text-anchor="end" >13</text><text x="531" y="353" font-size="12" font-weight="normal" fill="#bbbbbb" text-anchor="end" >14</text><text x="1281" y="353" font-size="12" font-weight="normal" fill="#bbbbbb" text-anchor="end" >14</text><text x="531" y="371" font-size="12" font-weight="normal" fill="#bbbbbb" text-anchor="end" >15</text><text x="1281" y="371" font-size="12" font-weight="normal" fill="#bbbbbb" text-anchor="end" >15</text><text x="531" y="389" font-size="12" font-weight="normal" fill="#bbbbbb" text-anchor="end" >16</text><text x="1281" y="389" font-size="12" font-weight="normal" fill="#bbbbbb" text-anchor="end" >16</text><text x="531" y="407" font-size="12" font-weight="normal" fill="#bbbbbb" text-anchor="end" >17</text><text x="1281" y="407" font-size="12" font-weight="normal" fill="#bbbbbb" text-anchor="end" >17</text><text x="531" y="425" font-size="12" font-weight="normal" fill="#bbbbbb" text-anchor="end" >18</text><text x="1281" y="425" font-size="12" font-weight="normal" fill="#bbbbbb" text-anchor="end" >18</text><text x="531" y="443" font-size="12" font-weight="normal" fill="#bbbbbb" text-anchor="end" >19</text><text x="1281" y="443" font-size="12" font-weight="normal" fill="#bbbbbb" text-anchor="end" >19</text><text x="531" y="461" font-size="12" font-weight="normal" fill="#bbbbbb" text-anchor="end" >20</text><text x="1281" y="461" font-size="12" font-weight="normal" fill="#bbbbbb" text-anchor="end" >20</text><text x="531" y="479" font-size="12" font-weight="normal" fill="#bbbbbb" text-anchor="end" >21</text><text x="1281" y="479" font-size="12" font-weight="normal" fill="#bbbbbb" text-anchor="end" >21</text><text x="531" y="497" font-size="12" font-weight="normal" fill="#bbbbbb" text-anchor="end" >22</text><text x="1281" y="497" font-size="12" font-weight="normal" fill="#bbbbbb" text-anchor="end" >22</text><text x="531" y="515" font-size="12" font-weight="normal" fill="#bbbbbb" text-anchor="end" >23</text><text x="1281" y="515" font-size="12" font-weight="normal" fill="#bbbbbb" text-anchor="end" >23</text><text x="531" y="533" font-size="12" font-weight="normal" fill="#bbbbbb" text-anchor="end" >24</text><text x="1281" y="533" font-size="12" font-weight="normal" fill="#bbbbbb" text-anchor="end" >24</text><text x="531" y="551" font-size="12" font-weight="normal" fill="#bbbbbb" text-anchor="end" >25</text><text x="1281" y="551" font-size="12" font-weight="normal" fill="#bbbbbb" text-anchor="end" >25</text><text x="531" y="569" font-size="12" font-weight="normal" fill="#bbbbbb" text-anchor="end" >26</text><text x="1281" y="569" font-size="12" font-weight="normal" fill="#bbbbbb" text-anchor="end" >26</text><text x="531" y="587" font-size="12" font-weight="normal" fill="#bbbbbb" text-anchor="end" >27</text><text x="1281" y="587" font-size="12" font-weight="normal" fill="#bbbbbb" text-anchor="end" >27</text><text x="531" y="605" font-size="12" font-weight="normal" fill="#bbbbbb" text-anchor="end" >28</text><text x="1281" y="605" font-size="12" font-weight="normal" fill="#bbbbbb" text-anchor="end" >28</text><text x="531" y="623" font-size="12" font-weight="normal" fill="#bbbbbb" text-anchor="end" >29</text><text x="1281" y="623" font-size="12" font-weight="normal" fill="#bbbbbb" text-anchor="end" >29</text><text x="531" y="641" font-size="12" font-weight="normal" fill="#bbbbbb" text-anchor="end" >30</text><text x="1281" y="641" font-size="12" font-weight="normal" fill="#bbbbbb" text-anchor="end" >30</text><text x="531" y="659" font-size="12" font-weight="normal" fill="#bbbbbb" text-anchor="end" >31</text><text x="1281" y="659" font-size="12" font-weight="normal" fill="#bbbbbb" text-anchor="end" >31</text><text x="531" y="677" font-size="12" font-weight="normal" fill="#bbbbbb" text-anchor="end" >32</text><text x="1281" y="677" font-size="12" font-weight="normal" fill="#bbbbbb" text-anchor="end" >32</text><text x="531" y="695" font-size="12" font-weight="normal" fill="#bbbbbb" text-anchor="end" >33</text><text x="1281" y="695" font-size="12" font-weight="normal" fill="#bbbbbb" text-anchor="end" >33</text><text x="531" y="713" font-size="12" font-weight="normal" fill="#bbbbbb" text-anchor="end" >34</text><text x="1281" y="713" font-size="12" font-weight="normal" fill="#bbbbbb" text-anchor="end" >34</text><text x="531" y="731" font-size="12" font-weight="normal" fill="#bbbbbb" text-anchor="end" >35</text><text x="1281" y="731" font-size="12" font-weight="normal" fill="#bbbbbb" text-anchor="end" >35</text><text x="531" y="749" font-size="12" font-weight="normal" fill="#bbbbbb" text-anchor="end" >36</text><text x="1281" y="749" font-size="12" font-weight="normal" fill="#bbbbbb" text-anchor="end" >36</text><text x="531" y="767" font-size="12" font-weight="normal" fill="#bbbbbb" text-anchor="end" >37</text><text x="1281" y="767" font-size="12" font-weight="normal" fill="#bbbbbb" text-anchor="end" >37</text><text x="531" y="785" font-size="12" font-weight="normal" fill="#bbbbbb" text-anchor="end" >38</text><text x="1281" y="785" font-size="12" font-weight="normal" fill="#bbbbbb" text-anchor="end" >38</text><text x="531" y="803" font-size="12" font-weight="normal" fill="#bbbbbb" text-anchor="end" >39</text><text x="1281" y="803" font-size="12" font-weight="normal" fill="#bbbbbb" text-anchor="end" >39</text><text x="531" y="821" font-size="12" font-weight="normal" fill="#bbbbbb" text-anchor="end" >40</text><text x="1281" y="821" font-size="12" font-weight="normal" fill="#bbbbbb" text-anchor="end" >40</text>
</svg></body></html>
